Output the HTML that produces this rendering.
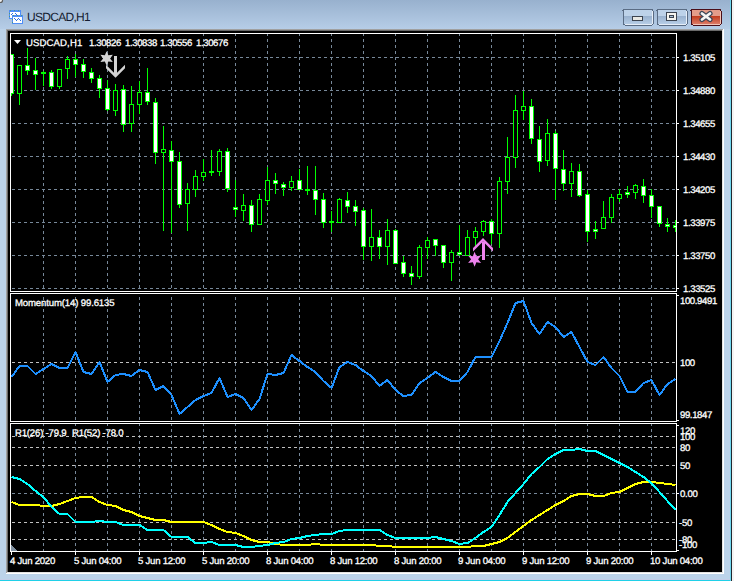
<!DOCTYPE html>
<html><head><meta charset="utf-8"><style>
html,body{margin:0;padding:0;width:734px;height:581px;overflow:hidden;}
body{position:relative;background:#bcd3ea;font-family:"Liberation Sans",sans-serif;}
.t{position:absolute;white-space:pre;line-height:1;text-rendering:geometricPrecision;-webkit-text-stroke:0.3px currentColor;}
#lbl .t{transform-origin:0 0;}
svg{position:absolute;left:0;top:0;}
</style></head><body>
<svg width="734" height="581" viewBox="0 0 734 581" shape-rendering="crispEdges">
<defs>
<linearGradient id="tg" x1="0" y1="0" x2="0" y2="1">
<stop offset="0" stop-color="#98b1ce"/><stop offset="1" stop-color="#b6cde7"/>
</linearGradient>
<linearGradient id="bg1" x1="0" y1="0" x2="0" y2="1"><stop offset="0" stop-color="#98b1ce"/><stop offset="1" stop-color="#b6cde6"/></linearGradient>
<linearGradient id="bg2" x1="0" y1="0" x2="0" y2="1"><stop offset="0" stop-color="#c03a1c"/><stop offset="1" stop-color="#dc7a66"/></linearGradient>
<clipPath id="cm"><rect x="11" y="34" width="665" height="257"/></clipPath>
<clipPath id="cp2"><rect x="11" y="294" width="665" height="127"/></clipPath>
<clipPath id="cp3"><rect x="11" y="424" width="665" height="127"/></clipPath>
</defs>
<rect x="0" y="0" width="734" height="581" fill="#bcd3ea"/>
<rect x="0" y="0" width="734" height="29" fill="url(#tg)"/>
<circle cx="0.5" cy="0.5" r="2.6" fill="#606060" shape-rendering="geometricPrecision"/><circle cx="0" cy="0" r="2" fill="#f0f0f0" shape-rendering="geometricPrecision"/>
<rect x="0" y="579" width="730" height="1" fill="#c4cde8"/>
<rect x="0" y="580" width="731" height="1" fill="#20d0e8"/>
<rect x="730" y="0" width="1" height="581" fill="#70d8f0"/>
<rect x="731" y="0" width="1" height="581" fill="#202830"/>
<rect x="732" y="0" width="2" height="581" fill="#f4f4f4"/>

<g shape-rendering="crispEdges">
<rect x="9" y="10" width="12" height="9" fill="#4f8ef8"/>
<rect x="10" y="12" width="10" height="6" fill="#ffffff"/>
<path d="M11 14h1v1h-1zM12 13h1v1h-1zM15 13h1v1h-1zM16 14h1v1h-1zM17 15h1v1h-1z" fill="#3070e0"/>
<rect x="12" y="15" width="11" height="9" fill="#4f8ef8"/>
<rect x="13" y="17" width="9" height="6" fill="#ffffff"/>
<path d="M14 18h1v1h-1zM15 19h1v1h-1zM16 20h1v1h-1zM17 19h1v1h-1zM18 18h1v1h-1zM19 19h1v1h-1zM20 20h1v1h-1z" fill="#3070e0"/>
<path d="M10 10h1v1h-1zM14 10h1v1h-1zM18 10h1v1h-1zM13 15h1v1h-1zM17 15h1v1h-1zM21 15h1v1h-1zM9 13h1v1h-1zM9 16h1v1h-1zM12 19h1v1h-1zM12 22h1v1h-1z" fill="#4a9a80"/>
</g>
<g>
<rect x="622.5" y="8.5" width="31" height="17" rx="2" fill="#5a6c84"/>
<rect x="623.5" y="9.5" width="29" height="15" rx="1" fill="#e6eef8"/>
<rect x="624" y="10" width="28" height="6" fill="#bdd2e9"/>
<rect x="624" y="16" width="28" height="8" fill="url(#bg1)"/>
<rect x="656.5" y="8.5" width="31" height="17" rx="2" fill="#5a6c84"/>
<rect x="657.5" y="9.5" width="29" height="15" rx="1" fill="#e6eef8"/>
<rect x="658" y="10" width="28" height="6" fill="#bdd2e9"/>
<rect x="658" y="16" width="28" height="8" fill="url(#bg1)"/>
<rect x="690.5" y="8.5" width="31" height="17" rx="2" fill="#4a0e18"/>
<rect x="691.5" y="9.5" width="29" height="15" rx="1" fill="#f2c4b8"/>
<rect x="692" y="10" width="28" height="6" fill="#e49c8a"/>
<rect x="692" y="16" width="28" height="8" fill="url(#bg2)"/>
</g>
<g shape-rendering="crispEdges">
<rect x="632" y="16" width="11" height="5" fill="#3c4450"/>
<rect x="633" y="17" width="9" height="3" fill="#e8e8e4"/>
<rect x="666" y="12" width="11" height="9" fill="#3c4450"/>
<rect x="667" y="13" width="9" height="7" fill="#f4f4f0"/>
<rect x="669" y="15" width="5" height="3" fill="#3c4450"/>
<rect x="670" y="16" width="3" height="1" fill="#a8c0d8"/>
</g>
<g shape-rendering="geometricPrecision">
<path d="M702 13.5 L710 19.5 M710 13.5 L702 19.5" stroke="#3c4658" stroke-width="5.2" stroke-linecap="round"/>
<path d="M702 13.5 L710 19.5 M710 13.5 L702 19.5" stroke="#f4f4f4" stroke-width="2.8" stroke-linecap="round"/>
</g>

<rect x="6" y="29" width="717" height="1" fill="#a0a0a0"/>
<rect x="6" y="29" width="1" height="544" fill="#a0a0a0"/>
<rect x="7" y="30" width="715" height="1" fill="#696969"/>
<rect x="7" y="30" width="1" height="542" fill="#696969"/>
<rect x="6" y="573" width="718" height="1" fill="#ffffff"/>
<rect x="723" y="29" width="1" height="545" fill="#ffffff"/>
<rect x="7" y="572" width="716" height="1" fill="#e3e3e3"/>
<rect x="722" y="30" width="1" height="543" fill="#e3e3e3"/>
<rect x="8" y="31" width="714" height="541" fill="#000"/>
<path d="M43 34v2h1v-2zM43 39v3h1v-3zM43 45v3h1v-3zM43 51v3h1v-3zM43 57v3h1v-3zM43 63v3h1v-3zM43 69v3h1v-3zM43 75v3h1v-3zM43 81v3h1v-3zM43 87v3h1v-3zM43 93v3h1v-3zM43 99v3h1v-3zM43 105v3h1v-3zM43 111v3h1v-3zM43 117v3h1v-3zM43 123v3h1v-3zM43 129v3h1v-3zM43 135v3h1v-3zM43 141v3h1v-3zM43 147v3h1v-3zM43 153v3h1v-3zM43 159v3h1v-3zM43 165v3h1v-3zM43 171v3h1v-3zM43 177v3h1v-3zM43 183v3h1v-3zM43 189v3h1v-3zM43 195v3h1v-3zM43 201v3h1v-3zM43 207v3h1v-3zM43 213v3h1v-3zM43 219v3h1v-3zM43 225v3h1v-3zM43 231v3h1v-3zM43 237v3h1v-3zM43 243v3h1v-3zM43 249v3h1v-3zM43 255v3h1v-3zM43 261v3h1v-3zM43 267v3h1v-3zM43 273v3h1v-3zM43 279v3h1v-3zM43 285v3h1v-3z" fill="#778899"/><path d="M75 34v2h1v-2zM75 39v3h1v-3zM75 45v3h1v-3zM75 51v3h1v-3zM75 57v3h1v-3zM75 63v3h1v-3zM75 69v3h1v-3zM75 75v3h1v-3zM75 81v3h1v-3zM75 87v3h1v-3zM75 93v3h1v-3zM75 99v3h1v-3zM75 105v3h1v-3zM75 111v3h1v-3zM75 117v3h1v-3zM75 123v3h1v-3zM75 129v3h1v-3zM75 135v3h1v-3zM75 141v3h1v-3zM75 147v3h1v-3zM75 153v3h1v-3zM75 159v3h1v-3zM75 165v3h1v-3zM75 171v3h1v-3zM75 177v3h1v-3zM75 183v3h1v-3zM75 189v3h1v-3zM75 195v3h1v-3zM75 201v3h1v-3zM75 207v3h1v-3zM75 213v3h1v-3zM75 219v3h1v-3zM75 225v3h1v-3zM75 231v3h1v-3zM75 237v3h1v-3zM75 243v3h1v-3zM75 249v3h1v-3zM75 255v3h1v-3zM75 261v3h1v-3zM75 267v3h1v-3zM75 273v3h1v-3zM75 279v3h1v-3zM75 285v3h1v-3z" fill="#778899"/><path d="M107 34v2h1v-2zM107 39v3h1v-3zM107 45v3h1v-3zM107 51v3h1v-3zM107 57v3h1v-3zM107 63v3h1v-3zM107 69v3h1v-3zM107 75v3h1v-3zM107 81v3h1v-3zM107 87v3h1v-3zM107 93v3h1v-3zM107 99v3h1v-3zM107 105v3h1v-3zM107 111v3h1v-3zM107 117v3h1v-3zM107 123v3h1v-3zM107 129v3h1v-3zM107 135v3h1v-3zM107 141v3h1v-3zM107 147v3h1v-3zM107 153v3h1v-3zM107 159v3h1v-3zM107 165v3h1v-3zM107 171v3h1v-3zM107 177v3h1v-3zM107 183v3h1v-3zM107 189v3h1v-3zM107 195v3h1v-3zM107 201v3h1v-3zM107 207v3h1v-3zM107 213v3h1v-3zM107 219v3h1v-3zM107 225v3h1v-3zM107 231v3h1v-3zM107 237v3h1v-3zM107 243v3h1v-3zM107 249v3h1v-3zM107 255v3h1v-3zM107 261v3h1v-3zM107 267v3h1v-3zM107 273v3h1v-3zM107 279v3h1v-3zM107 285v3h1v-3z" fill="#778899"/><path d="M139 34v2h1v-2zM139 39v3h1v-3zM139 45v3h1v-3zM139 51v3h1v-3zM139 57v3h1v-3zM139 63v3h1v-3zM139 69v3h1v-3zM139 75v3h1v-3zM139 81v3h1v-3zM139 87v3h1v-3zM139 93v3h1v-3zM139 99v3h1v-3zM139 105v3h1v-3zM139 111v3h1v-3zM139 117v3h1v-3zM139 123v3h1v-3zM139 129v3h1v-3zM139 135v3h1v-3zM139 141v3h1v-3zM139 147v3h1v-3zM139 153v3h1v-3zM139 159v3h1v-3zM139 165v3h1v-3zM139 171v3h1v-3zM139 177v3h1v-3zM139 183v3h1v-3zM139 189v3h1v-3zM139 195v3h1v-3zM139 201v3h1v-3zM139 207v3h1v-3zM139 213v3h1v-3zM139 219v3h1v-3zM139 225v3h1v-3zM139 231v3h1v-3zM139 237v3h1v-3zM139 243v3h1v-3zM139 249v3h1v-3zM139 255v3h1v-3zM139 261v3h1v-3zM139 267v3h1v-3zM139 273v3h1v-3zM139 279v3h1v-3zM139 285v3h1v-3z" fill="#778899"/><path d="M171 34v2h1v-2zM171 39v3h1v-3zM171 45v3h1v-3zM171 51v3h1v-3zM171 57v3h1v-3zM171 63v3h1v-3zM171 69v3h1v-3zM171 75v3h1v-3zM171 81v3h1v-3zM171 87v3h1v-3zM171 93v3h1v-3zM171 99v3h1v-3zM171 105v3h1v-3zM171 111v3h1v-3zM171 117v3h1v-3zM171 123v3h1v-3zM171 129v3h1v-3zM171 135v3h1v-3zM171 141v3h1v-3zM171 147v3h1v-3zM171 153v3h1v-3zM171 159v3h1v-3zM171 165v3h1v-3zM171 171v3h1v-3zM171 177v3h1v-3zM171 183v3h1v-3zM171 189v3h1v-3zM171 195v3h1v-3zM171 201v3h1v-3zM171 207v3h1v-3zM171 213v3h1v-3zM171 219v3h1v-3zM171 225v3h1v-3zM171 231v3h1v-3zM171 237v3h1v-3zM171 243v3h1v-3zM171 249v3h1v-3zM171 255v3h1v-3zM171 261v3h1v-3zM171 267v3h1v-3zM171 273v3h1v-3zM171 279v3h1v-3zM171 285v3h1v-3z" fill="#778899"/><path d="M203 34v2h1v-2zM203 39v3h1v-3zM203 45v3h1v-3zM203 51v3h1v-3zM203 57v3h1v-3zM203 63v3h1v-3zM203 69v3h1v-3zM203 75v3h1v-3zM203 81v3h1v-3zM203 87v3h1v-3zM203 93v3h1v-3zM203 99v3h1v-3zM203 105v3h1v-3zM203 111v3h1v-3zM203 117v3h1v-3zM203 123v3h1v-3zM203 129v3h1v-3zM203 135v3h1v-3zM203 141v3h1v-3zM203 147v3h1v-3zM203 153v3h1v-3zM203 159v3h1v-3zM203 165v3h1v-3zM203 171v3h1v-3zM203 177v3h1v-3zM203 183v3h1v-3zM203 189v3h1v-3zM203 195v3h1v-3zM203 201v3h1v-3zM203 207v3h1v-3zM203 213v3h1v-3zM203 219v3h1v-3zM203 225v3h1v-3zM203 231v3h1v-3zM203 237v3h1v-3zM203 243v3h1v-3zM203 249v3h1v-3zM203 255v3h1v-3zM203 261v3h1v-3zM203 267v3h1v-3zM203 273v3h1v-3zM203 279v3h1v-3zM203 285v3h1v-3z" fill="#778899"/><path d="M235 34v2h1v-2zM235 39v3h1v-3zM235 45v3h1v-3zM235 51v3h1v-3zM235 57v3h1v-3zM235 63v3h1v-3zM235 69v3h1v-3zM235 75v3h1v-3zM235 81v3h1v-3zM235 87v3h1v-3zM235 93v3h1v-3zM235 99v3h1v-3zM235 105v3h1v-3zM235 111v3h1v-3zM235 117v3h1v-3zM235 123v3h1v-3zM235 129v3h1v-3zM235 135v3h1v-3zM235 141v3h1v-3zM235 147v3h1v-3zM235 153v3h1v-3zM235 159v3h1v-3zM235 165v3h1v-3zM235 171v3h1v-3zM235 177v3h1v-3zM235 183v3h1v-3zM235 189v3h1v-3zM235 195v3h1v-3zM235 201v3h1v-3zM235 207v3h1v-3zM235 213v3h1v-3zM235 219v3h1v-3zM235 225v3h1v-3zM235 231v3h1v-3zM235 237v3h1v-3zM235 243v3h1v-3zM235 249v3h1v-3zM235 255v3h1v-3zM235 261v3h1v-3zM235 267v3h1v-3zM235 273v3h1v-3zM235 279v3h1v-3zM235 285v3h1v-3z" fill="#778899"/><path d="M267 34v2h1v-2zM267 39v3h1v-3zM267 45v3h1v-3zM267 51v3h1v-3zM267 57v3h1v-3zM267 63v3h1v-3zM267 69v3h1v-3zM267 75v3h1v-3zM267 81v3h1v-3zM267 87v3h1v-3zM267 93v3h1v-3zM267 99v3h1v-3zM267 105v3h1v-3zM267 111v3h1v-3zM267 117v3h1v-3zM267 123v3h1v-3zM267 129v3h1v-3zM267 135v3h1v-3zM267 141v3h1v-3zM267 147v3h1v-3zM267 153v3h1v-3zM267 159v3h1v-3zM267 165v3h1v-3zM267 171v3h1v-3zM267 177v3h1v-3zM267 183v3h1v-3zM267 189v3h1v-3zM267 195v3h1v-3zM267 201v3h1v-3zM267 207v3h1v-3zM267 213v3h1v-3zM267 219v3h1v-3zM267 225v3h1v-3zM267 231v3h1v-3zM267 237v3h1v-3zM267 243v3h1v-3zM267 249v3h1v-3zM267 255v3h1v-3zM267 261v3h1v-3zM267 267v3h1v-3zM267 273v3h1v-3zM267 279v3h1v-3zM267 285v3h1v-3z" fill="#778899"/><path d="M299 34v2h1v-2zM299 39v3h1v-3zM299 45v3h1v-3zM299 51v3h1v-3zM299 57v3h1v-3zM299 63v3h1v-3zM299 69v3h1v-3zM299 75v3h1v-3zM299 81v3h1v-3zM299 87v3h1v-3zM299 93v3h1v-3zM299 99v3h1v-3zM299 105v3h1v-3zM299 111v3h1v-3zM299 117v3h1v-3zM299 123v3h1v-3zM299 129v3h1v-3zM299 135v3h1v-3zM299 141v3h1v-3zM299 147v3h1v-3zM299 153v3h1v-3zM299 159v3h1v-3zM299 165v3h1v-3zM299 171v3h1v-3zM299 177v3h1v-3zM299 183v3h1v-3zM299 189v3h1v-3zM299 195v3h1v-3zM299 201v3h1v-3zM299 207v3h1v-3zM299 213v3h1v-3zM299 219v3h1v-3zM299 225v3h1v-3zM299 231v3h1v-3zM299 237v3h1v-3zM299 243v3h1v-3zM299 249v3h1v-3zM299 255v3h1v-3zM299 261v3h1v-3zM299 267v3h1v-3zM299 273v3h1v-3zM299 279v3h1v-3zM299 285v3h1v-3z" fill="#778899"/><path d="M331 34v2h1v-2zM331 39v3h1v-3zM331 45v3h1v-3zM331 51v3h1v-3zM331 57v3h1v-3zM331 63v3h1v-3zM331 69v3h1v-3zM331 75v3h1v-3zM331 81v3h1v-3zM331 87v3h1v-3zM331 93v3h1v-3zM331 99v3h1v-3zM331 105v3h1v-3zM331 111v3h1v-3zM331 117v3h1v-3zM331 123v3h1v-3zM331 129v3h1v-3zM331 135v3h1v-3zM331 141v3h1v-3zM331 147v3h1v-3zM331 153v3h1v-3zM331 159v3h1v-3zM331 165v3h1v-3zM331 171v3h1v-3zM331 177v3h1v-3zM331 183v3h1v-3zM331 189v3h1v-3zM331 195v3h1v-3zM331 201v3h1v-3zM331 207v3h1v-3zM331 213v3h1v-3zM331 219v3h1v-3zM331 225v3h1v-3zM331 231v3h1v-3zM331 237v3h1v-3zM331 243v3h1v-3zM331 249v3h1v-3zM331 255v3h1v-3zM331 261v3h1v-3zM331 267v3h1v-3zM331 273v3h1v-3zM331 279v3h1v-3zM331 285v3h1v-3z" fill="#778899"/><path d="M363 34v2h1v-2zM363 39v3h1v-3zM363 45v3h1v-3zM363 51v3h1v-3zM363 57v3h1v-3zM363 63v3h1v-3zM363 69v3h1v-3zM363 75v3h1v-3zM363 81v3h1v-3zM363 87v3h1v-3zM363 93v3h1v-3zM363 99v3h1v-3zM363 105v3h1v-3zM363 111v3h1v-3zM363 117v3h1v-3zM363 123v3h1v-3zM363 129v3h1v-3zM363 135v3h1v-3zM363 141v3h1v-3zM363 147v3h1v-3zM363 153v3h1v-3zM363 159v3h1v-3zM363 165v3h1v-3zM363 171v3h1v-3zM363 177v3h1v-3zM363 183v3h1v-3zM363 189v3h1v-3zM363 195v3h1v-3zM363 201v3h1v-3zM363 207v3h1v-3zM363 213v3h1v-3zM363 219v3h1v-3zM363 225v3h1v-3zM363 231v3h1v-3zM363 237v3h1v-3zM363 243v3h1v-3zM363 249v3h1v-3zM363 255v3h1v-3zM363 261v3h1v-3zM363 267v3h1v-3zM363 273v3h1v-3zM363 279v3h1v-3zM363 285v3h1v-3z" fill="#778899"/><path d="M395 34v2h1v-2zM395 39v3h1v-3zM395 45v3h1v-3zM395 51v3h1v-3zM395 57v3h1v-3zM395 63v3h1v-3zM395 69v3h1v-3zM395 75v3h1v-3zM395 81v3h1v-3zM395 87v3h1v-3zM395 93v3h1v-3zM395 99v3h1v-3zM395 105v3h1v-3zM395 111v3h1v-3zM395 117v3h1v-3zM395 123v3h1v-3zM395 129v3h1v-3zM395 135v3h1v-3zM395 141v3h1v-3zM395 147v3h1v-3zM395 153v3h1v-3zM395 159v3h1v-3zM395 165v3h1v-3zM395 171v3h1v-3zM395 177v3h1v-3zM395 183v3h1v-3zM395 189v3h1v-3zM395 195v3h1v-3zM395 201v3h1v-3zM395 207v3h1v-3zM395 213v3h1v-3zM395 219v3h1v-3zM395 225v3h1v-3zM395 231v3h1v-3zM395 237v3h1v-3zM395 243v3h1v-3zM395 249v3h1v-3zM395 255v3h1v-3zM395 261v3h1v-3zM395 267v3h1v-3zM395 273v3h1v-3zM395 279v3h1v-3zM395 285v3h1v-3z" fill="#778899"/><path d="M427 34v2h1v-2zM427 39v3h1v-3zM427 45v3h1v-3zM427 51v3h1v-3zM427 57v3h1v-3zM427 63v3h1v-3zM427 69v3h1v-3zM427 75v3h1v-3zM427 81v3h1v-3zM427 87v3h1v-3zM427 93v3h1v-3zM427 99v3h1v-3zM427 105v3h1v-3zM427 111v3h1v-3zM427 117v3h1v-3zM427 123v3h1v-3zM427 129v3h1v-3zM427 135v3h1v-3zM427 141v3h1v-3zM427 147v3h1v-3zM427 153v3h1v-3zM427 159v3h1v-3zM427 165v3h1v-3zM427 171v3h1v-3zM427 177v3h1v-3zM427 183v3h1v-3zM427 189v3h1v-3zM427 195v3h1v-3zM427 201v3h1v-3zM427 207v3h1v-3zM427 213v3h1v-3zM427 219v3h1v-3zM427 225v3h1v-3zM427 231v3h1v-3zM427 237v3h1v-3zM427 243v3h1v-3zM427 249v3h1v-3zM427 255v3h1v-3zM427 261v3h1v-3zM427 267v3h1v-3zM427 273v3h1v-3zM427 279v3h1v-3zM427 285v3h1v-3z" fill="#778899"/><path d="M459 34v2h1v-2zM459 39v3h1v-3zM459 45v3h1v-3zM459 51v3h1v-3zM459 57v3h1v-3zM459 63v3h1v-3zM459 69v3h1v-3zM459 75v3h1v-3zM459 81v3h1v-3zM459 87v3h1v-3zM459 93v3h1v-3zM459 99v3h1v-3zM459 105v3h1v-3zM459 111v3h1v-3zM459 117v3h1v-3zM459 123v3h1v-3zM459 129v3h1v-3zM459 135v3h1v-3zM459 141v3h1v-3zM459 147v3h1v-3zM459 153v3h1v-3zM459 159v3h1v-3zM459 165v3h1v-3zM459 171v3h1v-3zM459 177v3h1v-3zM459 183v3h1v-3zM459 189v3h1v-3zM459 195v3h1v-3zM459 201v3h1v-3zM459 207v3h1v-3zM459 213v3h1v-3zM459 219v3h1v-3zM459 225v3h1v-3zM459 231v3h1v-3zM459 237v3h1v-3zM459 243v3h1v-3zM459 249v3h1v-3zM459 255v3h1v-3zM459 261v3h1v-3zM459 267v3h1v-3zM459 273v3h1v-3zM459 279v3h1v-3zM459 285v3h1v-3z" fill="#778899"/><path d="M491 34v2h1v-2zM491 39v3h1v-3zM491 45v3h1v-3zM491 51v3h1v-3zM491 57v3h1v-3zM491 63v3h1v-3zM491 69v3h1v-3zM491 75v3h1v-3zM491 81v3h1v-3zM491 87v3h1v-3zM491 93v3h1v-3zM491 99v3h1v-3zM491 105v3h1v-3zM491 111v3h1v-3zM491 117v3h1v-3zM491 123v3h1v-3zM491 129v3h1v-3zM491 135v3h1v-3zM491 141v3h1v-3zM491 147v3h1v-3zM491 153v3h1v-3zM491 159v3h1v-3zM491 165v3h1v-3zM491 171v3h1v-3zM491 177v3h1v-3zM491 183v3h1v-3zM491 189v3h1v-3zM491 195v3h1v-3zM491 201v3h1v-3zM491 207v3h1v-3zM491 213v3h1v-3zM491 219v3h1v-3zM491 225v3h1v-3zM491 231v3h1v-3zM491 237v3h1v-3zM491 243v3h1v-3zM491 249v3h1v-3zM491 255v3h1v-3zM491 261v3h1v-3zM491 267v3h1v-3zM491 273v3h1v-3zM491 279v3h1v-3zM491 285v3h1v-3z" fill="#778899"/><path d="M523 34v2h1v-2zM523 39v3h1v-3zM523 45v3h1v-3zM523 51v3h1v-3zM523 57v3h1v-3zM523 63v3h1v-3zM523 69v3h1v-3zM523 75v3h1v-3zM523 81v3h1v-3zM523 87v3h1v-3zM523 93v3h1v-3zM523 99v3h1v-3zM523 105v3h1v-3zM523 111v3h1v-3zM523 117v3h1v-3zM523 123v3h1v-3zM523 129v3h1v-3zM523 135v3h1v-3zM523 141v3h1v-3zM523 147v3h1v-3zM523 153v3h1v-3zM523 159v3h1v-3zM523 165v3h1v-3zM523 171v3h1v-3zM523 177v3h1v-3zM523 183v3h1v-3zM523 189v3h1v-3zM523 195v3h1v-3zM523 201v3h1v-3zM523 207v3h1v-3zM523 213v3h1v-3zM523 219v3h1v-3zM523 225v3h1v-3zM523 231v3h1v-3zM523 237v3h1v-3zM523 243v3h1v-3zM523 249v3h1v-3zM523 255v3h1v-3zM523 261v3h1v-3zM523 267v3h1v-3zM523 273v3h1v-3zM523 279v3h1v-3zM523 285v3h1v-3z" fill="#778899"/><path d="M555 34v2h1v-2zM555 39v3h1v-3zM555 45v3h1v-3zM555 51v3h1v-3zM555 57v3h1v-3zM555 63v3h1v-3zM555 69v3h1v-3zM555 75v3h1v-3zM555 81v3h1v-3zM555 87v3h1v-3zM555 93v3h1v-3zM555 99v3h1v-3zM555 105v3h1v-3zM555 111v3h1v-3zM555 117v3h1v-3zM555 123v3h1v-3zM555 129v3h1v-3zM555 135v3h1v-3zM555 141v3h1v-3zM555 147v3h1v-3zM555 153v3h1v-3zM555 159v3h1v-3zM555 165v3h1v-3zM555 171v3h1v-3zM555 177v3h1v-3zM555 183v3h1v-3zM555 189v3h1v-3zM555 195v3h1v-3zM555 201v3h1v-3zM555 207v3h1v-3zM555 213v3h1v-3zM555 219v3h1v-3zM555 225v3h1v-3zM555 231v3h1v-3zM555 237v3h1v-3zM555 243v3h1v-3zM555 249v3h1v-3zM555 255v3h1v-3zM555 261v3h1v-3zM555 267v3h1v-3zM555 273v3h1v-3zM555 279v3h1v-3zM555 285v3h1v-3z" fill="#778899"/><path d="M587 34v2h1v-2zM587 39v3h1v-3zM587 45v3h1v-3zM587 51v3h1v-3zM587 57v3h1v-3zM587 63v3h1v-3zM587 69v3h1v-3zM587 75v3h1v-3zM587 81v3h1v-3zM587 87v3h1v-3zM587 93v3h1v-3zM587 99v3h1v-3zM587 105v3h1v-3zM587 111v3h1v-3zM587 117v3h1v-3zM587 123v3h1v-3zM587 129v3h1v-3zM587 135v3h1v-3zM587 141v3h1v-3zM587 147v3h1v-3zM587 153v3h1v-3zM587 159v3h1v-3zM587 165v3h1v-3zM587 171v3h1v-3zM587 177v3h1v-3zM587 183v3h1v-3zM587 189v3h1v-3zM587 195v3h1v-3zM587 201v3h1v-3zM587 207v3h1v-3zM587 213v3h1v-3zM587 219v3h1v-3zM587 225v3h1v-3zM587 231v3h1v-3zM587 237v3h1v-3zM587 243v3h1v-3zM587 249v3h1v-3zM587 255v3h1v-3zM587 261v3h1v-3zM587 267v3h1v-3zM587 273v3h1v-3zM587 279v3h1v-3zM587 285v3h1v-3z" fill="#778899"/><path d="M619 34v2h1v-2zM619 39v3h1v-3zM619 45v3h1v-3zM619 51v3h1v-3zM619 57v3h1v-3zM619 63v3h1v-3zM619 69v3h1v-3zM619 75v3h1v-3zM619 81v3h1v-3zM619 87v3h1v-3zM619 93v3h1v-3zM619 99v3h1v-3zM619 105v3h1v-3zM619 111v3h1v-3zM619 117v3h1v-3zM619 123v3h1v-3zM619 129v3h1v-3zM619 135v3h1v-3zM619 141v3h1v-3zM619 147v3h1v-3zM619 153v3h1v-3zM619 159v3h1v-3zM619 165v3h1v-3zM619 171v3h1v-3zM619 177v3h1v-3zM619 183v3h1v-3zM619 189v3h1v-3zM619 195v3h1v-3zM619 201v3h1v-3zM619 207v3h1v-3zM619 213v3h1v-3zM619 219v3h1v-3zM619 225v3h1v-3zM619 231v3h1v-3zM619 237v3h1v-3zM619 243v3h1v-3zM619 249v3h1v-3zM619 255v3h1v-3zM619 261v3h1v-3zM619 267v3h1v-3zM619 273v3h1v-3zM619 279v3h1v-3zM619 285v3h1v-3z" fill="#778899"/><path d="M651 34v2h1v-2zM651 39v3h1v-3zM651 45v3h1v-3zM651 51v3h1v-3zM651 57v3h1v-3zM651 63v3h1v-3zM651 69v3h1v-3zM651 75v3h1v-3zM651 81v3h1v-3zM651 87v3h1v-3zM651 93v3h1v-3zM651 99v3h1v-3zM651 105v3h1v-3zM651 111v3h1v-3zM651 117v3h1v-3zM651 123v3h1v-3zM651 129v3h1v-3zM651 135v3h1v-3zM651 141v3h1v-3zM651 147v3h1v-3zM651 153v3h1v-3zM651 159v3h1v-3zM651 165v3h1v-3zM651 171v3h1v-3zM651 177v3h1v-3zM651 183v3h1v-3zM651 189v3h1v-3zM651 195v3h1v-3zM651 201v3h1v-3zM651 207v3h1v-3zM651 213v3h1v-3zM651 219v3h1v-3zM651 225v3h1v-3zM651 231v3h1v-3zM651 237v3h1v-3zM651 243v3h1v-3zM651 249v3h1v-3zM651 255v3h1v-3zM651 261v3h1v-3zM651 267v3h1v-3zM651 273v3h1v-3zM651 279v3h1v-3zM651 285v3h1v-3z" fill="#778899"/><path d="M43 297v3h1v-3zM43 303v3h1v-3zM43 309v3h1v-3zM43 315v3h1v-3zM43 321v3h1v-3zM43 327v3h1v-3zM43 333v3h1v-3zM43 339v3h1v-3zM43 345v3h1v-3zM43 351v3h1v-3zM43 357v3h1v-3zM43 363v3h1v-3zM43 369v3h1v-3zM43 375v3h1v-3zM43 381v3h1v-3zM43 387v3h1v-3zM43 393v3h1v-3zM43 399v3h1v-3zM43 405v3h1v-3zM43 411v3h1v-3zM43 417v3h1v-3z" fill="#778899"/><path d="M75 297v3h1v-3zM75 303v3h1v-3zM75 309v3h1v-3zM75 315v3h1v-3zM75 321v3h1v-3zM75 327v3h1v-3zM75 333v3h1v-3zM75 339v3h1v-3zM75 345v3h1v-3zM75 351v3h1v-3zM75 357v3h1v-3zM75 363v3h1v-3zM75 369v3h1v-3zM75 375v3h1v-3zM75 381v3h1v-3zM75 387v3h1v-3zM75 393v3h1v-3zM75 399v3h1v-3zM75 405v3h1v-3zM75 411v3h1v-3zM75 417v3h1v-3z" fill="#778899"/><path d="M107 297v3h1v-3zM107 303v3h1v-3zM107 309v3h1v-3zM107 315v3h1v-3zM107 321v3h1v-3zM107 327v3h1v-3zM107 333v3h1v-3zM107 339v3h1v-3zM107 345v3h1v-3zM107 351v3h1v-3zM107 357v3h1v-3zM107 363v3h1v-3zM107 369v3h1v-3zM107 375v3h1v-3zM107 381v3h1v-3zM107 387v3h1v-3zM107 393v3h1v-3zM107 399v3h1v-3zM107 405v3h1v-3zM107 411v3h1v-3zM107 417v3h1v-3z" fill="#778899"/><path d="M139 297v3h1v-3zM139 303v3h1v-3zM139 309v3h1v-3zM139 315v3h1v-3zM139 321v3h1v-3zM139 327v3h1v-3zM139 333v3h1v-3zM139 339v3h1v-3zM139 345v3h1v-3zM139 351v3h1v-3zM139 357v3h1v-3zM139 363v3h1v-3zM139 369v3h1v-3zM139 375v3h1v-3zM139 381v3h1v-3zM139 387v3h1v-3zM139 393v3h1v-3zM139 399v3h1v-3zM139 405v3h1v-3zM139 411v3h1v-3zM139 417v3h1v-3z" fill="#778899"/><path d="M171 297v3h1v-3zM171 303v3h1v-3zM171 309v3h1v-3zM171 315v3h1v-3zM171 321v3h1v-3zM171 327v3h1v-3zM171 333v3h1v-3zM171 339v3h1v-3zM171 345v3h1v-3zM171 351v3h1v-3zM171 357v3h1v-3zM171 363v3h1v-3zM171 369v3h1v-3zM171 375v3h1v-3zM171 381v3h1v-3zM171 387v3h1v-3zM171 393v3h1v-3zM171 399v3h1v-3zM171 405v3h1v-3zM171 411v3h1v-3zM171 417v3h1v-3z" fill="#778899"/><path d="M203 297v3h1v-3zM203 303v3h1v-3zM203 309v3h1v-3zM203 315v3h1v-3zM203 321v3h1v-3zM203 327v3h1v-3zM203 333v3h1v-3zM203 339v3h1v-3zM203 345v3h1v-3zM203 351v3h1v-3zM203 357v3h1v-3zM203 363v3h1v-3zM203 369v3h1v-3zM203 375v3h1v-3zM203 381v3h1v-3zM203 387v3h1v-3zM203 393v3h1v-3zM203 399v3h1v-3zM203 405v3h1v-3zM203 411v3h1v-3zM203 417v3h1v-3z" fill="#778899"/><path d="M235 297v3h1v-3zM235 303v3h1v-3zM235 309v3h1v-3zM235 315v3h1v-3zM235 321v3h1v-3zM235 327v3h1v-3zM235 333v3h1v-3zM235 339v3h1v-3zM235 345v3h1v-3zM235 351v3h1v-3zM235 357v3h1v-3zM235 363v3h1v-3zM235 369v3h1v-3zM235 375v3h1v-3zM235 381v3h1v-3zM235 387v3h1v-3zM235 393v3h1v-3zM235 399v3h1v-3zM235 405v3h1v-3zM235 411v3h1v-3zM235 417v3h1v-3z" fill="#778899"/><path d="M267 297v3h1v-3zM267 303v3h1v-3zM267 309v3h1v-3zM267 315v3h1v-3zM267 321v3h1v-3zM267 327v3h1v-3zM267 333v3h1v-3zM267 339v3h1v-3zM267 345v3h1v-3zM267 351v3h1v-3zM267 357v3h1v-3zM267 363v3h1v-3zM267 369v3h1v-3zM267 375v3h1v-3zM267 381v3h1v-3zM267 387v3h1v-3zM267 393v3h1v-3zM267 399v3h1v-3zM267 405v3h1v-3zM267 411v3h1v-3zM267 417v3h1v-3z" fill="#778899"/><path d="M299 297v3h1v-3zM299 303v3h1v-3zM299 309v3h1v-3zM299 315v3h1v-3zM299 321v3h1v-3zM299 327v3h1v-3zM299 333v3h1v-3zM299 339v3h1v-3zM299 345v3h1v-3zM299 351v3h1v-3zM299 357v3h1v-3zM299 363v3h1v-3zM299 369v3h1v-3zM299 375v3h1v-3zM299 381v3h1v-3zM299 387v3h1v-3zM299 393v3h1v-3zM299 399v3h1v-3zM299 405v3h1v-3zM299 411v3h1v-3zM299 417v3h1v-3z" fill="#778899"/><path d="M331 297v3h1v-3zM331 303v3h1v-3zM331 309v3h1v-3zM331 315v3h1v-3zM331 321v3h1v-3zM331 327v3h1v-3zM331 333v3h1v-3zM331 339v3h1v-3zM331 345v3h1v-3zM331 351v3h1v-3zM331 357v3h1v-3zM331 363v3h1v-3zM331 369v3h1v-3zM331 375v3h1v-3zM331 381v3h1v-3zM331 387v3h1v-3zM331 393v3h1v-3zM331 399v3h1v-3zM331 405v3h1v-3zM331 411v3h1v-3zM331 417v3h1v-3z" fill="#778899"/><path d="M363 297v3h1v-3zM363 303v3h1v-3zM363 309v3h1v-3zM363 315v3h1v-3zM363 321v3h1v-3zM363 327v3h1v-3zM363 333v3h1v-3zM363 339v3h1v-3zM363 345v3h1v-3zM363 351v3h1v-3zM363 357v3h1v-3zM363 363v3h1v-3zM363 369v3h1v-3zM363 375v3h1v-3zM363 381v3h1v-3zM363 387v3h1v-3zM363 393v3h1v-3zM363 399v3h1v-3zM363 405v3h1v-3zM363 411v3h1v-3zM363 417v3h1v-3z" fill="#778899"/><path d="M395 297v3h1v-3zM395 303v3h1v-3zM395 309v3h1v-3zM395 315v3h1v-3zM395 321v3h1v-3zM395 327v3h1v-3zM395 333v3h1v-3zM395 339v3h1v-3zM395 345v3h1v-3zM395 351v3h1v-3zM395 357v3h1v-3zM395 363v3h1v-3zM395 369v3h1v-3zM395 375v3h1v-3zM395 381v3h1v-3zM395 387v3h1v-3zM395 393v3h1v-3zM395 399v3h1v-3zM395 405v3h1v-3zM395 411v3h1v-3zM395 417v3h1v-3z" fill="#778899"/><path d="M427 297v3h1v-3zM427 303v3h1v-3zM427 309v3h1v-3zM427 315v3h1v-3zM427 321v3h1v-3zM427 327v3h1v-3zM427 333v3h1v-3zM427 339v3h1v-3zM427 345v3h1v-3zM427 351v3h1v-3zM427 357v3h1v-3zM427 363v3h1v-3zM427 369v3h1v-3zM427 375v3h1v-3zM427 381v3h1v-3zM427 387v3h1v-3zM427 393v3h1v-3zM427 399v3h1v-3zM427 405v3h1v-3zM427 411v3h1v-3zM427 417v3h1v-3z" fill="#778899"/><path d="M459 297v3h1v-3zM459 303v3h1v-3zM459 309v3h1v-3zM459 315v3h1v-3zM459 321v3h1v-3zM459 327v3h1v-3zM459 333v3h1v-3zM459 339v3h1v-3zM459 345v3h1v-3zM459 351v3h1v-3zM459 357v3h1v-3zM459 363v3h1v-3zM459 369v3h1v-3zM459 375v3h1v-3zM459 381v3h1v-3zM459 387v3h1v-3zM459 393v3h1v-3zM459 399v3h1v-3zM459 405v3h1v-3zM459 411v3h1v-3zM459 417v3h1v-3z" fill="#778899"/><path d="M491 297v3h1v-3zM491 303v3h1v-3zM491 309v3h1v-3zM491 315v3h1v-3zM491 321v3h1v-3zM491 327v3h1v-3zM491 333v3h1v-3zM491 339v3h1v-3zM491 345v3h1v-3zM491 351v3h1v-3zM491 357v3h1v-3zM491 363v3h1v-3zM491 369v3h1v-3zM491 375v3h1v-3zM491 381v3h1v-3zM491 387v3h1v-3zM491 393v3h1v-3zM491 399v3h1v-3zM491 405v3h1v-3zM491 411v3h1v-3zM491 417v3h1v-3z" fill="#778899"/><path d="M523 297v3h1v-3zM523 303v3h1v-3zM523 309v3h1v-3zM523 315v3h1v-3zM523 321v3h1v-3zM523 327v3h1v-3zM523 333v3h1v-3zM523 339v3h1v-3zM523 345v3h1v-3zM523 351v3h1v-3zM523 357v3h1v-3zM523 363v3h1v-3zM523 369v3h1v-3zM523 375v3h1v-3zM523 381v3h1v-3zM523 387v3h1v-3zM523 393v3h1v-3zM523 399v3h1v-3zM523 405v3h1v-3zM523 411v3h1v-3zM523 417v3h1v-3z" fill="#778899"/><path d="M555 297v3h1v-3zM555 303v3h1v-3zM555 309v3h1v-3zM555 315v3h1v-3zM555 321v3h1v-3zM555 327v3h1v-3zM555 333v3h1v-3zM555 339v3h1v-3zM555 345v3h1v-3zM555 351v3h1v-3zM555 357v3h1v-3zM555 363v3h1v-3zM555 369v3h1v-3zM555 375v3h1v-3zM555 381v3h1v-3zM555 387v3h1v-3zM555 393v3h1v-3zM555 399v3h1v-3zM555 405v3h1v-3zM555 411v3h1v-3zM555 417v3h1v-3z" fill="#778899"/><path d="M587 297v3h1v-3zM587 303v3h1v-3zM587 309v3h1v-3zM587 315v3h1v-3zM587 321v3h1v-3zM587 327v3h1v-3zM587 333v3h1v-3zM587 339v3h1v-3zM587 345v3h1v-3zM587 351v3h1v-3zM587 357v3h1v-3zM587 363v3h1v-3zM587 369v3h1v-3zM587 375v3h1v-3zM587 381v3h1v-3zM587 387v3h1v-3zM587 393v3h1v-3zM587 399v3h1v-3zM587 405v3h1v-3zM587 411v3h1v-3zM587 417v3h1v-3z" fill="#778899"/><path d="M619 297v3h1v-3zM619 303v3h1v-3zM619 309v3h1v-3zM619 315v3h1v-3zM619 321v3h1v-3zM619 327v3h1v-3zM619 333v3h1v-3zM619 339v3h1v-3zM619 345v3h1v-3zM619 351v3h1v-3zM619 357v3h1v-3zM619 363v3h1v-3zM619 369v3h1v-3zM619 375v3h1v-3zM619 381v3h1v-3zM619 387v3h1v-3zM619 393v3h1v-3zM619 399v3h1v-3zM619 405v3h1v-3zM619 411v3h1v-3zM619 417v3h1v-3z" fill="#778899"/><path d="M651 297v3h1v-3zM651 303v3h1v-3zM651 309v3h1v-3zM651 315v3h1v-3zM651 321v3h1v-3zM651 327v3h1v-3zM651 333v3h1v-3zM651 339v3h1v-3zM651 345v3h1v-3zM651 351v3h1v-3zM651 357v3h1v-3zM651 363v3h1v-3zM651 369v3h1v-3zM651 375v3h1v-3zM651 381v3h1v-3zM651 387v3h1v-3zM651 393v3h1v-3zM651 399v3h1v-3zM651 405v3h1v-3zM651 411v3h1v-3zM651 417v3h1v-3z" fill="#778899"/><path d="M43 424v2h1v-2zM43 429v3h1v-3zM43 435v3h1v-3zM43 441v3h1v-3zM43 447v3h1v-3zM43 453v3h1v-3zM43 459v3h1v-3zM43 465v3h1v-3zM43 471v3h1v-3zM43 477v3h1v-3zM43 483v3h1v-3zM43 489v3h1v-3zM43 495v3h1v-3zM43 501v3h1v-3zM43 507v3h1v-3zM43 513v3h1v-3zM43 519v3h1v-3zM43 525v3h1v-3zM43 531v3h1v-3zM43 537v3h1v-3zM43 543v3h1v-3zM43 549v2h1v-2z" fill="#778899"/><path d="M75 424v2h1v-2zM75 429v3h1v-3zM75 435v3h1v-3zM75 441v3h1v-3zM75 447v3h1v-3zM75 453v3h1v-3zM75 459v3h1v-3zM75 465v3h1v-3zM75 471v3h1v-3zM75 477v3h1v-3zM75 483v3h1v-3zM75 489v3h1v-3zM75 495v3h1v-3zM75 501v3h1v-3zM75 507v3h1v-3zM75 513v3h1v-3zM75 519v3h1v-3zM75 525v3h1v-3zM75 531v3h1v-3zM75 537v3h1v-3zM75 543v3h1v-3zM75 549v2h1v-2z" fill="#778899"/><path d="M107 424v2h1v-2zM107 429v3h1v-3zM107 435v3h1v-3zM107 441v3h1v-3zM107 447v3h1v-3zM107 453v3h1v-3zM107 459v3h1v-3zM107 465v3h1v-3zM107 471v3h1v-3zM107 477v3h1v-3zM107 483v3h1v-3zM107 489v3h1v-3zM107 495v3h1v-3zM107 501v3h1v-3zM107 507v3h1v-3zM107 513v3h1v-3zM107 519v3h1v-3zM107 525v3h1v-3zM107 531v3h1v-3zM107 537v3h1v-3zM107 543v3h1v-3zM107 549v2h1v-2z" fill="#778899"/><path d="M139 424v2h1v-2zM139 429v3h1v-3zM139 435v3h1v-3zM139 441v3h1v-3zM139 447v3h1v-3zM139 453v3h1v-3zM139 459v3h1v-3zM139 465v3h1v-3zM139 471v3h1v-3zM139 477v3h1v-3zM139 483v3h1v-3zM139 489v3h1v-3zM139 495v3h1v-3zM139 501v3h1v-3zM139 507v3h1v-3zM139 513v3h1v-3zM139 519v3h1v-3zM139 525v3h1v-3zM139 531v3h1v-3zM139 537v3h1v-3zM139 543v3h1v-3zM139 549v2h1v-2z" fill="#778899"/><path d="M171 424v2h1v-2zM171 429v3h1v-3zM171 435v3h1v-3zM171 441v3h1v-3zM171 447v3h1v-3zM171 453v3h1v-3zM171 459v3h1v-3zM171 465v3h1v-3zM171 471v3h1v-3zM171 477v3h1v-3zM171 483v3h1v-3zM171 489v3h1v-3zM171 495v3h1v-3zM171 501v3h1v-3zM171 507v3h1v-3zM171 513v3h1v-3zM171 519v3h1v-3zM171 525v3h1v-3zM171 531v3h1v-3zM171 537v3h1v-3zM171 543v3h1v-3zM171 549v2h1v-2z" fill="#778899"/><path d="M203 424v2h1v-2zM203 429v3h1v-3zM203 435v3h1v-3zM203 441v3h1v-3zM203 447v3h1v-3zM203 453v3h1v-3zM203 459v3h1v-3zM203 465v3h1v-3zM203 471v3h1v-3zM203 477v3h1v-3zM203 483v3h1v-3zM203 489v3h1v-3zM203 495v3h1v-3zM203 501v3h1v-3zM203 507v3h1v-3zM203 513v3h1v-3zM203 519v3h1v-3zM203 525v3h1v-3zM203 531v3h1v-3zM203 537v3h1v-3zM203 543v3h1v-3zM203 549v2h1v-2z" fill="#778899"/><path d="M235 424v2h1v-2zM235 429v3h1v-3zM235 435v3h1v-3zM235 441v3h1v-3zM235 447v3h1v-3zM235 453v3h1v-3zM235 459v3h1v-3zM235 465v3h1v-3zM235 471v3h1v-3zM235 477v3h1v-3zM235 483v3h1v-3zM235 489v3h1v-3zM235 495v3h1v-3zM235 501v3h1v-3zM235 507v3h1v-3zM235 513v3h1v-3zM235 519v3h1v-3zM235 525v3h1v-3zM235 531v3h1v-3zM235 537v3h1v-3zM235 543v3h1v-3zM235 549v2h1v-2z" fill="#778899"/><path d="M267 424v2h1v-2zM267 429v3h1v-3zM267 435v3h1v-3zM267 441v3h1v-3zM267 447v3h1v-3zM267 453v3h1v-3zM267 459v3h1v-3zM267 465v3h1v-3zM267 471v3h1v-3zM267 477v3h1v-3zM267 483v3h1v-3zM267 489v3h1v-3zM267 495v3h1v-3zM267 501v3h1v-3zM267 507v3h1v-3zM267 513v3h1v-3zM267 519v3h1v-3zM267 525v3h1v-3zM267 531v3h1v-3zM267 537v3h1v-3zM267 543v3h1v-3zM267 549v2h1v-2z" fill="#778899"/><path d="M299 424v2h1v-2zM299 429v3h1v-3zM299 435v3h1v-3zM299 441v3h1v-3zM299 447v3h1v-3zM299 453v3h1v-3zM299 459v3h1v-3zM299 465v3h1v-3zM299 471v3h1v-3zM299 477v3h1v-3zM299 483v3h1v-3zM299 489v3h1v-3zM299 495v3h1v-3zM299 501v3h1v-3zM299 507v3h1v-3zM299 513v3h1v-3zM299 519v3h1v-3zM299 525v3h1v-3zM299 531v3h1v-3zM299 537v3h1v-3zM299 543v3h1v-3zM299 549v2h1v-2z" fill="#778899"/><path d="M331 424v2h1v-2zM331 429v3h1v-3zM331 435v3h1v-3zM331 441v3h1v-3zM331 447v3h1v-3zM331 453v3h1v-3zM331 459v3h1v-3zM331 465v3h1v-3zM331 471v3h1v-3zM331 477v3h1v-3zM331 483v3h1v-3zM331 489v3h1v-3zM331 495v3h1v-3zM331 501v3h1v-3zM331 507v3h1v-3zM331 513v3h1v-3zM331 519v3h1v-3zM331 525v3h1v-3zM331 531v3h1v-3zM331 537v3h1v-3zM331 543v3h1v-3zM331 549v2h1v-2z" fill="#778899"/><path d="M363 424v2h1v-2zM363 429v3h1v-3zM363 435v3h1v-3zM363 441v3h1v-3zM363 447v3h1v-3zM363 453v3h1v-3zM363 459v3h1v-3zM363 465v3h1v-3zM363 471v3h1v-3zM363 477v3h1v-3zM363 483v3h1v-3zM363 489v3h1v-3zM363 495v3h1v-3zM363 501v3h1v-3zM363 507v3h1v-3zM363 513v3h1v-3zM363 519v3h1v-3zM363 525v3h1v-3zM363 531v3h1v-3zM363 537v3h1v-3zM363 543v3h1v-3zM363 549v2h1v-2z" fill="#778899"/><path d="M395 424v2h1v-2zM395 429v3h1v-3zM395 435v3h1v-3zM395 441v3h1v-3zM395 447v3h1v-3zM395 453v3h1v-3zM395 459v3h1v-3zM395 465v3h1v-3zM395 471v3h1v-3zM395 477v3h1v-3zM395 483v3h1v-3zM395 489v3h1v-3zM395 495v3h1v-3zM395 501v3h1v-3zM395 507v3h1v-3zM395 513v3h1v-3zM395 519v3h1v-3zM395 525v3h1v-3zM395 531v3h1v-3zM395 537v3h1v-3zM395 543v3h1v-3zM395 549v2h1v-2z" fill="#778899"/><path d="M427 424v2h1v-2zM427 429v3h1v-3zM427 435v3h1v-3zM427 441v3h1v-3zM427 447v3h1v-3zM427 453v3h1v-3zM427 459v3h1v-3zM427 465v3h1v-3zM427 471v3h1v-3zM427 477v3h1v-3zM427 483v3h1v-3zM427 489v3h1v-3zM427 495v3h1v-3zM427 501v3h1v-3zM427 507v3h1v-3zM427 513v3h1v-3zM427 519v3h1v-3zM427 525v3h1v-3zM427 531v3h1v-3zM427 537v3h1v-3zM427 543v3h1v-3zM427 549v2h1v-2z" fill="#778899"/><path d="M459 424v2h1v-2zM459 429v3h1v-3zM459 435v3h1v-3zM459 441v3h1v-3zM459 447v3h1v-3zM459 453v3h1v-3zM459 459v3h1v-3zM459 465v3h1v-3zM459 471v3h1v-3zM459 477v3h1v-3zM459 483v3h1v-3zM459 489v3h1v-3zM459 495v3h1v-3zM459 501v3h1v-3zM459 507v3h1v-3zM459 513v3h1v-3zM459 519v3h1v-3zM459 525v3h1v-3zM459 531v3h1v-3zM459 537v3h1v-3zM459 543v3h1v-3zM459 549v2h1v-2z" fill="#778899"/><path d="M491 424v2h1v-2zM491 429v3h1v-3zM491 435v3h1v-3zM491 441v3h1v-3zM491 447v3h1v-3zM491 453v3h1v-3zM491 459v3h1v-3zM491 465v3h1v-3zM491 471v3h1v-3zM491 477v3h1v-3zM491 483v3h1v-3zM491 489v3h1v-3zM491 495v3h1v-3zM491 501v3h1v-3zM491 507v3h1v-3zM491 513v3h1v-3zM491 519v3h1v-3zM491 525v3h1v-3zM491 531v3h1v-3zM491 537v3h1v-3zM491 543v3h1v-3zM491 549v2h1v-2z" fill="#778899"/><path d="M523 424v2h1v-2zM523 429v3h1v-3zM523 435v3h1v-3zM523 441v3h1v-3zM523 447v3h1v-3zM523 453v3h1v-3zM523 459v3h1v-3zM523 465v3h1v-3zM523 471v3h1v-3zM523 477v3h1v-3zM523 483v3h1v-3zM523 489v3h1v-3zM523 495v3h1v-3zM523 501v3h1v-3zM523 507v3h1v-3zM523 513v3h1v-3zM523 519v3h1v-3zM523 525v3h1v-3zM523 531v3h1v-3zM523 537v3h1v-3zM523 543v3h1v-3zM523 549v2h1v-2z" fill="#778899"/><path d="M555 424v2h1v-2zM555 429v3h1v-3zM555 435v3h1v-3zM555 441v3h1v-3zM555 447v3h1v-3zM555 453v3h1v-3zM555 459v3h1v-3zM555 465v3h1v-3zM555 471v3h1v-3zM555 477v3h1v-3zM555 483v3h1v-3zM555 489v3h1v-3zM555 495v3h1v-3zM555 501v3h1v-3zM555 507v3h1v-3zM555 513v3h1v-3zM555 519v3h1v-3zM555 525v3h1v-3zM555 531v3h1v-3zM555 537v3h1v-3zM555 543v3h1v-3zM555 549v2h1v-2z" fill="#778899"/><path d="M587 424v2h1v-2zM587 429v3h1v-3zM587 435v3h1v-3zM587 441v3h1v-3zM587 447v3h1v-3zM587 453v3h1v-3zM587 459v3h1v-3zM587 465v3h1v-3zM587 471v3h1v-3zM587 477v3h1v-3zM587 483v3h1v-3zM587 489v3h1v-3zM587 495v3h1v-3zM587 501v3h1v-3zM587 507v3h1v-3zM587 513v3h1v-3zM587 519v3h1v-3zM587 525v3h1v-3zM587 531v3h1v-3zM587 537v3h1v-3zM587 543v3h1v-3zM587 549v2h1v-2z" fill="#778899"/><path d="M619 424v2h1v-2zM619 429v3h1v-3zM619 435v3h1v-3zM619 441v3h1v-3zM619 447v3h1v-3zM619 453v3h1v-3zM619 459v3h1v-3zM619 465v3h1v-3zM619 471v3h1v-3zM619 477v3h1v-3zM619 483v3h1v-3zM619 489v3h1v-3zM619 495v3h1v-3zM619 501v3h1v-3zM619 507v3h1v-3zM619 513v3h1v-3zM619 519v3h1v-3zM619 525v3h1v-3zM619 531v3h1v-3zM619 537v3h1v-3zM619 543v3h1v-3zM619 549v2h1v-2z" fill="#778899"/><path d="M651 424v2h1v-2zM651 429v3h1v-3zM651 435v3h1v-3zM651 441v3h1v-3zM651 447v3h1v-3zM651 453v3h1v-3zM651 459v3h1v-3zM651 465v3h1v-3zM651 471v3h1v-3zM651 477v3h1v-3zM651 483v3h1v-3zM651 489v3h1v-3zM651 495v3h1v-3zM651 501v3h1v-3zM651 507v3h1v-3zM651 513v3h1v-3zM651 519v3h1v-3zM651 525v3h1v-3zM651 531v3h1v-3zM651 537v3h1v-3zM651 543v3h1v-3zM651 549v2h1v-2z" fill="#778899"/><path d="M12 57h3v1h-3zM18 57h3v1h-3zM24 57h3v1h-3zM30 57h3v1h-3zM36 57h3v1h-3zM42 57h3v1h-3zM48 57h3v1h-3zM54 57h3v1h-3zM60 57h3v1h-3zM66 57h3v1h-3zM72 57h3v1h-3zM78 57h3v1h-3zM84 57h3v1h-3zM90 57h3v1h-3zM96 57h3v1h-3zM102 57h3v1h-3zM108 57h3v1h-3zM114 57h3v1h-3zM120 57h3v1h-3zM126 57h3v1h-3zM132 57h3v1h-3zM138 57h3v1h-3zM144 57h3v1h-3zM150 57h3v1h-3zM156 57h3v1h-3zM162 57h3v1h-3zM168 57h3v1h-3zM174 57h3v1h-3zM180 57h3v1h-3zM186 57h3v1h-3zM192 57h3v1h-3zM198 57h3v1h-3zM204 57h3v1h-3zM210 57h3v1h-3zM216 57h3v1h-3zM222 57h3v1h-3zM228 57h3v1h-3zM234 57h3v1h-3zM240 57h3v1h-3zM246 57h3v1h-3zM252 57h3v1h-3zM258 57h3v1h-3zM264 57h3v1h-3zM270 57h3v1h-3zM276 57h3v1h-3zM282 57h3v1h-3zM288 57h3v1h-3zM294 57h3v1h-3zM300 57h3v1h-3zM306 57h3v1h-3zM312 57h3v1h-3zM318 57h3v1h-3zM324 57h3v1h-3zM330 57h3v1h-3zM336 57h3v1h-3zM342 57h3v1h-3zM348 57h3v1h-3zM354 57h3v1h-3zM360 57h3v1h-3zM366 57h3v1h-3zM372 57h3v1h-3zM378 57h3v1h-3zM384 57h3v1h-3zM390 57h3v1h-3zM396 57h3v1h-3zM402 57h3v1h-3zM408 57h3v1h-3zM414 57h3v1h-3zM420 57h3v1h-3zM426 57h3v1h-3zM432 57h3v1h-3zM438 57h3v1h-3zM444 57h3v1h-3zM450 57h3v1h-3zM456 57h3v1h-3zM462 57h3v1h-3zM468 57h3v1h-3zM474 57h3v1h-3zM480 57h3v1h-3zM486 57h3v1h-3zM492 57h3v1h-3zM498 57h3v1h-3zM504 57h3v1h-3zM510 57h3v1h-3zM516 57h3v1h-3zM522 57h3v1h-3zM528 57h3v1h-3zM534 57h3v1h-3zM540 57h3v1h-3zM546 57h3v1h-3zM552 57h3v1h-3zM558 57h3v1h-3zM564 57h3v1h-3zM570 57h3v1h-3zM576 57h3v1h-3zM582 57h3v1h-3zM588 57h3v1h-3zM594 57h3v1h-3zM600 57h3v1h-3zM606 57h3v1h-3zM612 57h3v1h-3zM618 57h3v1h-3zM624 57h3v1h-3zM630 57h3v1h-3zM636 57h3v1h-3zM642 57h3v1h-3zM648 57h3v1h-3zM654 57h3v1h-3zM660 57h3v1h-3zM666 57h3v1h-3zM672 57h3v1h-3z" fill="#778899"/><path d="M12 90h3v1h-3zM18 90h3v1h-3zM24 90h3v1h-3zM30 90h3v1h-3zM36 90h3v1h-3zM42 90h3v1h-3zM48 90h3v1h-3zM54 90h3v1h-3zM60 90h3v1h-3zM66 90h3v1h-3zM72 90h3v1h-3zM78 90h3v1h-3zM84 90h3v1h-3zM90 90h3v1h-3zM96 90h3v1h-3zM102 90h3v1h-3zM108 90h3v1h-3zM114 90h3v1h-3zM120 90h3v1h-3zM126 90h3v1h-3zM132 90h3v1h-3zM138 90h3v1h-3zM144 90h3v1h-3zM150 90h3v1h-3zM156 90h3v1h-3zM162 90h3v1h-3zM168 90h3v1h-3zM174 90h3v1h-3zM180 90h3v1h-3zM186 90h3v1h-3zM192 90h3v1h-3zM198 90h3v1h-3zM204 90h3v1h-3zM210 90h3v1h-3zM216 90h3v1h-3zM222 90h3v1h-3zM228 90h3v1h-3zM234 90h3v1h-3zM240 90h3v1h-3zM246 90h3v1h-3zM252 90h3v1h-3zM258 90h3v1h-3zM264 90h3v1h-3zM270 90h3v1h-3zM276 90h3v1h-3zM282 90h3v1h-3zM288 90h3v1h-3zM294 90h3v1h-3zM300 90h3v1h-3zM306 90h3v1h-3zM312 90h3v1h-3zM318 90h3v1h-3zM324 90h3v1h-3zM330 90h3v1h-3zM336 90h3v1h-3zM342 90h3v1h-3zM348 90h3v1h-3zM354 90h3v1h-3zM360 90h3v1h-3zM366 90h3v1h-3zM372 90h3v1h-3zM378 90h3v1h-3zM384 90h3v1h-3zM390 90h3v1h-3zM396 90h3v1h-3zM402 90h3v1h-3zM408 90h3v1h-3zM414 90h3v1h-3zM420 90h3v1h-3zM426 90h3v1h-3zM432 90h3v1h-3zM438 90h3v1h-3zM444 90h3v1h-3zM450 90h3v1h-3zM456 90h3v1h-3zM462 90h3v1h-3zM468 90h3v1h-3zM474 90h3v1h-3zM480 90h3v1h-3zM486 90h3v1h-3zM492 90h3v1h-3zM498 90h3v1h-3zM504 90h3v1h-3zM510 90h3v1h-3zM516 90h3v1h-3zM522 90h3v1h-3zM528 90h3v1h-3zM534 90h3v1h-3zM540 90h3v1h-3zM546 90h3v1h-3zM552 90h3v1h-3zM558 90h3v1h-3zM564 90h3v1h-3zM570 90h3v1h-3zM576 90h3v1h-3zM582 90h3v1h-3zM588 90h3v1h-3zM594 90h3v1h-3zM600 90h3v1h-3zM606 90h3v1h-3zM612 90h3v1h-3zM618 90h3v1h-3zM624 90h3v1h-3zM630 90h3v1h-3zM636 90h3v1h-3zM642 90h3v1h-3zM648 90h3v1h-3zM654 90h3v1h-3zM660 90h3v1h-3zM666 90h3v1h-3zM672 90h3v1h-3z" fill="#778899"/><path d="M12 123h3v1h-3zM18 123h3v1h-3zM24 123h3v1h-3zM30 123h3v1h-3zM36 123h3v1h-3zM42 123h3v1h-3zM48 123h3v1h-3zM54 123h3v1h-3zM60 123h3v1h-3zM66 123h3v1h-3zM72 123h3v1h-3zM78 123h3v1h-3zM84 123h3v1h-3zM90 123h3v1h-3zM96 123h3v1h-3zM102 123h3v1h-3zM108 123h3v1h-3zM114 123h3v1h-3zM120 123h3v1h-3zM126 123h3v1h-3zM132 123h3v1h-3zM138 123h3v1h-3zM144 123h3v1h-3zM150 123h3v1h-3zM156 123h3v1h-3zM162 123h3v1h-3zM168 123h3v1h-3zM174 123h3v1h-3zM180 123h3v1h-3zM186 123h3v1h-3zM192 123h3v1h-3zM198 123h3v1h-3zM204 123h3v1h-3zM210 123h3v1h-3zM216 123h3v1h-3zM222 123h3v1h-3zM228 123h3v1h-3zM234 123h3v1h-3zM240 123h3v1h-3zM246 123h3v1h-3zM252 123h3v1h-3zM258 123h3v1h-3zM264 123h3v1h-3zM270 123h3v1h-3zM276 123h3v1h-3zM282 123h3v1h-3zM288 123h3v1h-3zM294 123h3v1h-3zM300 123h3v1h-3zM306 123h3v1h-3zM312 123h3v1h-3zM318 123h3v1h-3zM324 123h3v1h-3zM330 123h3v1h-3zM336 123h3v1h-3zM342 123h3v1h-3zM348 123h3v1h-3zM354 123h3v1h-3zM360 123h3v1h-3zM366 123h3v1h-3zM372 123h3v1h-3zM378 123h3v1h-3zM384 123h3v1h-3zM390 123h3v1h-3zM396 123h3v1h-3zM402 123h3v1h-3zM408 123h3v1h-3zM414 123h3v1h-3zM420 123h3v1h-3zM426 123h3v1h-3zM432 123h3v1h-3zM438 123h3v1h-3zM444 123h3v1h-3zM450 123h3v1h-3zM456 123h3v1h-3zM462 123h3v1h-3zM468 123h3v1h-3zM474 123h3v1h-3zM480 123h3v1h-3zM486 123h3v1h-3zM492 123h3v1h-3zM498 123h3v1h-3zM504 123h3v1h-3zM510 123h3v1h-3zM516 123h3v1h-3zM522 123h3v1h-3zM528 123h3v1h-3zM534 123h3v1h-3zM540 123h3v1h-3zM546 123h3v1h-3zM552 123h3v1h-3zM558 123h3v1h-3zM564 123h3v1h-3zM570 123h3v1h-3zM576 123h3v1h-3zM582 123h3v1h-3zM588 123h3v1h-3zM594 123h3v1h-3zM600 123h3v1h-3zM606 123h3v1h-3zM612 123h3v1h-3zM618 123h3v1h-3zM624 123h3v1h-3zM630 123h3v1h-3zM636 123h3v1h-3zM642 123h3v1h-3zM648 123h3v1h-3zM654 123h3v1h-3zM660 123h3v1h-3zM666 123h3v1h-3zM672 123h3v1h-3z" fill="#778899"/><path d="M12 156h3v1h-3zM18 156h3v1h-3zM24 156h3v1h-3zM30 156h3v1h-3zM36 156h3v1h-3zM42 156h3v1h-3zM48 156h3v1h-3zM54 156h3v1h-3zM60 156h3v1h-3zM66 156h3v1h-3zM72 156h3v1h-3zM78 156h3v1h-3zM84 156h3v1h-3zM90 156h3v1h-3zM96 156h3v1h-3zM102 156h3v1h-3zM108 156h3v1h-3zM114 156h3v1h-3zM120 156h3v1h-3zM126 156h3v1h-3zM132 156h3v1h-3zM138 156h3v1h-3zM144 156h3v1h-3zM150 156h3v1h-3zM156 156h3v1h-3zM162 156h3v1h-3zM168 156h3v1h-3zM174 156h3v1h-3zM180 156h3v1h-3zM186 156h3v1h-3zM192 156h3v1h-3zM198 156h3v1h-3zM204 156h3v1h-3zM210 156h3v1h-3zM216 156h3v1h-3zM222 156h3v1h-3zM228 156h3v1h-3zM234 156h3v1h-3zM240 156h3v1h-3zM246 156h3v1h-3zM252 156h3v1h-3zM258 156h3v1h-3zM264 156h3v1h-3zM270 156h3v1h-3zM276 156h3v1h-3zM282 156h3v1h-3zM288 156h3v1h-3zM294 156h3v1h-3zM300 156h3v1h-3zM306 156h3v1h-3zM312 156h3v1h-3zM318 156h3v1h-3zM324 156h3v1h-3zM330 156h3v1h-3zM336 156h3v1h-3zM342 156h3v1h-3zM348 156h3v1h-3zM354 156h3v1h-3zM360 156h3v1h-3zM366 156h3v1h-3zM372 156h3v1h-3zM378 156h3v1h-3zM384 156h3v1h-3zM390 156h3v1h-3zM396 156h3v1h-3zM402 156h3v1h-3zM408 156h3v1h-3zM414 156h3v1h-3zM420 156h3v1h-3zM426 156h3v1h-3zM432 156h3v1h-3zM438 156h3v1h-3zM444 156h3v1h-3zM450 156h3v1h-3zM456 156h3v1h-3zM462 156h3v1h-3zM468 156h3v1h-3zM474 156h3v1h-3zM480 156h3v1h-3zM486 156h3v1h-3zM492 156h3v1h-3zM498 156h3v1h-3zM504 156h3v1h-3zM510 156h3v1h-3zM516 156h3v1h-3zM522 156h3v1h-3zM528 156h3v1h-3zM534 156h3v1h-3zM540 156h3v1h-3zM546 156h3v1h-3zM552 156h3v1h-3zM558 156h3v1h-3zM564 156h3v1h-3zM570 156h3v1h-3zM576 156h3v1h-3zM582 156h3v1h-3zM588 156h3v1h-3zM594 156h3v1h-3zM600 156h3v1h-3zM606 156h3v1h-3zM612 156h3v1h-3zM618 156h3v1h-3zM624 156h3v1h-3zM630 156h3v1h-3zM636 156h3v1h-3zM642 156h3v1h-3zM648 156h3v1h-3zM654 156h3v1h-3zM660 156h3v1h-3zM666 156h3v1h-3zM672 156h3v1h-3z" fill="#778899"/><path d="M12 189h3v1h-3zM18 189h3v1h-3zM24 189h3v1h-3zM30 189h3v1h-3zM36 189h3v1h-3zM42 189h3v1h-3zM48 189h3v1h-3zM54 189h3v1h-3zM60 189h3v1h-3zM66 189h3v1h-3zM72 189h3v1h-3zM78 189h3v1h-3zM84 189h3v1h-3zM90 189h3v1h-3zM96 189h3v1h-3zM102 189h3v1h-3zM108 189h3v1h-3zM114 189h3v1h-3zM120 189h3v1h-3zM126 189h3v1h-3zM132 189h3v1h-3zM138 189h3v1h-3zM144 189h3v1h-3zM150 189h3v1h-3zM156 189h3v1h-3zM162 189h3v1h-3zM168 189h3v1h-3zM174 189h3v1h-3zM180 189h3v1h-3zM186 189h3v1h-3zM192 189h3v1h-3zM198 189h3v1h-3zM204 189h3v1h-3zM210 189h3v1h-3zM216 189h3v1h-3zM222 189h3v1h-3zM228 189h3v1h-3zM234 189h3v1h-3zM240 189h3v1h-3zM246 189h3v1h-3zM252 189h3v1h-3zM258 189h3v1h-3zM264 189h3v1h-3zM270 189h3v1h-3zM276 189h3v1h-3zM282 189h3v1h-3zM288 189h3v1h-3zM294 189h3v1h-3zM300 189h3v1h-3zM306 189h3v1h-3zM312 189h3v1h-3zM318 189h3v1h-3zM324 189h3v1h-3zM330 189h3v1h-3zM336 189h3v1h-3zM342 189h3v1h-3zM348 189h3v1h-3zM354 189h3v1h-3zM360 189h3v1h-3zM366 189h3v1h-3zM372 189h3v1h-3zM378 189h3v1h-3zM384 189h3v1h-3zM390 189h3v1h-3zM396 189h3v1h-3zM402 189h3v1h-3zM408 189h3v1h-3zM414 189h3v1h-3zM420 189h3v1h-3zM426 189h3v1h-3zM432 189h3v1h-3zM438 189h3v1h-3zM444 189h3v1h-3zM450 189h3v1h-3zM456 189h3v1h-3zM462 189h3v1h-3zM468 189h3v1h-3zM474 189h3v1h-3zM480 189h3v1h-3zM486 189h3v1h-3zM492 189h3v1h-3zM498 189h3v1h-3zM504 189h3v1h-3zM510 189h3v1h-3zM516 189h3v1h-3zM522 189h3v1h-3zM528 189h3v1h-3zM534 189h3v1h-3zM540 189h3v1h-3zM546 189h3v1h-3zM552 189h3v1h-3zM558 189h3v1h-3zM564 189h3v1h-3zM570 189h3v1h-3zM576 189h3v1h-3zM582 189h3v1h-3zM588 189h3v1h-3zM594 189h3v1h-3zM600 189h3v1h-3zM606 189h3v1h-3zM612 189h3v1h-3zM618 189h3v1h-3zM624 189h3v1h-3zM630 189h3v1h-3zM636 189h3v1h-3zM642 189h3v1h-3zM648 189h3v1h-3zM654 189h3v1h-3zM660 189h3v1h-3zM666 189h3v1h-3zM672 189h3v1h-3z" fill="#778899"/><path d="M12 222h3v1h-3zM18 222h3v1h-3zM24 222h3v1h-3zM30 222h3v1h-3zM36 222h3v1h-3zM42 222h3v1h-3zM48 222h3v1h-3zM54 222h3v1h-3zM60 222h3v1h-3zM66 222h3v1h-3zM72 222h3v1h-3zM78 222h3v1h-3zM84 222h3v1h-3zM90 222h3v1h-3zM96 222h3v1h-3zM102 222h3v1h-3zM108 222h3v1h-3zM114 222h3v1h-3zM120 222h3v1h-3zM126 222h3v1h-3zM132 222h3v1h-3zM138 222h3v1h-3zM144 222h3v1h-3zM150 222h3v1h-3zM156 222h3v1h-3zM162 222h3v1h-3zM168 222h3v1h-3zM174 222h3v1h-3zM180 222h3v1h-3zM186 222h3v1h-3zM192 222h3v1h-3zM198 222h3v1h-3zM204 222h3v1h-3zM210 222h3v1h-3zM216 222h3v1h-3zM222 222h3v1h-3zM228 222h3v1h-3zM234 222h3v1h-3zM240 222h3v1h-3zM246 222h3v1h-3zM252 222h3v1h-3zM258 222h3v1h-3zM264 222h3v1h-3zM270 222h3v1h-3zM276 222h3v1h-3zM282 222h3v1h-3zM288 222h3v1h-3zM294 222h3v1h-3zM300 222h3v1h-3zM306 222h3v1h-3zM312 222h3v1h-3zM318 222h3v1h-3zM324 222h3v1h-3zM330 222h3v1h-3zM336 222h3v1h-3zM342 222h3v1h-3zM348 222h3v1h-3zM354 222h3v1h-3zM360 222h3v1h-3zM366 222h3v1h-3zM372 222h3v1h-3zM378 222h3v1h-3zM384 222h3v1h-3zM390 222h3v1h-3zM396 222h3v1h-3zM402 222h3v1h-3zM408 222h3v1h-3zM414 222h3v1h-3zM420 222h3v1h-3zM426 222h3v1h-3zM432 222h3v1h-3zM438 222h3v1h-3zM444 222h3v1h-3zM450 222h3v1h-3zM456 222h3v1h-3zM462 222h3v1h-3zM468 222h3v1h-3zM474 222h3v1h-3zM480 222h3v1h-3zM486 222h3v1h-3zM492 222h3v1h-3zM498 222h3v1h-3zM504 222h3v1h-3zM510 222h3v1h-3zM516 222h3v1h-3zM522 222h3v1h-3zM528 222h3v1h-3zM534 222h3v1h-3zM540 222h3v1h-3zM546 222h3v1h-3zM552 222h3v1h-3zM558 222h3v1h-3zM564 222h3v1h-3zM570 222h3v1h-3zM576 222h3v1h-3zM582 222h3v1h-3zM588 222h3v1h-3zM594 222h3v1h-3zM600 222h3v1h-3zM606 222h3v1h-3zM612 222h3v1h-3zM618 222h3v1h-3zM624 222h3v1h-3zM630 222h3v1h-3zM636 222h3v1h-3zM642 222h3v1h-3zM648 222h3v1h-3zM654 222h3v1h-3zM660 222h3v1h-3zM666 222h3v1h-3zM672 222h3v1h-3z" fill="#778899"/><path d="M12 255h3v1h-3zM18 255h3v1h-3zM24 255h3v1h-3zM30 255h3v1h-3zM36 255h3v1h-3zM42 255h3v1h-3zM48 255h3v1h-3zM54 255h3v1h-3zM60 255h3v1h-3zM66 255h3v1h-3zM72 255h3v1h-3zM78 255h3v1h-3zM84 255h3v1h-3zM90 255h3v1h-3zM96 255h3v1h-3zM102 255h3v1h-3zM108 255h3v1h-3zM114 255h3v1h-3zM120 255h3v1h-3zM126 255h3v1h-3zM132 255h3v1h-3zM138 255h3v1h-3zM144 255h3v1h-3zM150 255h3v1h-3zM156 255h3v1h-3zM162 255h3v1h-3zM168 255h3v1h-3zM174 255h3v1h-3zM180 255h3v1h-3zM186 255h3v1h-3zM192 255h3v1h-3zM198 255h3v1h-3zM204 255h3v1h-3zM210 255h3v1h-3zM216 255h3v1h-3zM222 255h3v1h-3zM228 255h3v1h-3zM234 255h3v1h-3zM240 255h3v1h-3zM246 255h3v1h-3zM252 255h3v1h-3zM258 255h3v1h-3zM264 255h3v1h-3zM270 255h3v1h-3zM276 255h3v1h-3zM282 255h3v1h-3zM288 255h3v1h-3zM294 255h3v1h-3zM300 255h3v1h-3zM306 255h3v1h-3zM312 255h3v1h-3zM318 255h3v1h-3zM324 255h3v1h-3zM330 255h3v1h-3zM336 255h3v1h-3zM342 255h3v1h-3zM348 255h3v1h-3zM354 255h3v1h-3zM360 255h3v1h-3zM366 255h3v1h-3zM372 255h3v1h-3zM378 255h3v1h-3zM384 255h3v1h-3zM390 255h3v1h-3zM396 255h3v1h-3zM402 255h3v1h-3zM408 255h3v1h-3zM414 255h3v1h-3zM420 255h3v1h-3zM426 255h3v1h-3zM432 255h3v1h-3zM438 255h3v1h-3zM444 255h3v1h-3zM450 255h3v1h-3zM456 255h3v1h-3zM462 255h3v1h-3zM468 255h3v1h-3zM474 255h3v1h-3zM480 255h3v1h-3zM486 255h3v1h-3zM492 255h3v1h-3zM498 255h3v1h-3zM504 255h3v1h-3zM510 255h3v1h-3zM516 255h3v1h-3zM522 255h3v1h-3zM528 255h3v1h-3zM534 255h3v1h-3zM540 255h3v1h-3zM546 255h3v1h-3zM552 255h3v1h-3zM558 255h3v1h-3zM564 255h3v1h-3zM570 255h3v1h-3zM576 255h3v1h-3zM582 255h3v1h-3zM588 255h3v1h-3zM594 255h3v1h-3zM600 255h3v1h-3zM606 255h3v1h-3zM612 255h3v1h-3zM618 255h3v1h-3zM624 255h3v1h-3zM630 255h3v1h-3zM636 255h3v1h-3zM642 255h3v1h-3zM648 255h3v1h-3zM654 255h3v1h-3zM660 255h3v1h-3zM666 255h3v1h-3zM672 255h3v1h-3z" fill="#778899"/><path d="M12 288h3v1h-3zM18 288h3v1h-3zM24 288h3v1h-3zM30 288h3v1h-3zM36 288h3v1h-3zM42 288h3v1h-3zM48 288h3v1h-3zM54 288h3v1h-3zM60 288h3v1h-3zM66 288h3v1h-3zM72 288h3v1h-3zM78 288h3v1h-3zM84 288h3v1h-3zM90 288h3v1h-3zM96 288h3v1h-3zM102 288h3v1h-3zM108 288h3v1h-3zM114 288h3v1h-3zM120 288h3v1h-3zM126 288h3v1h-3zM132 288h3v1h-3zM138 288h3v1h-3zM144 288h3v1h-3zM150 288h3v1h-3zM156 288h3v1h-3zM162 288h3v1h-3zM168 288h3v1h-3zM174 288h3v1h-3zM180 288h3v1h-3zM186 288h3v1h-3zM192 288h3v1h-3zM198 288h3v1h-3zM204 288h3v1h-3zM210 288h3v1h-3zM216 288h3v1h-3zM222 288h3v1h-3zM228 288h3v1h-3zM234 288h3v1h-3zM240 288h3v1h-3zM246 288h3v1h-3zM252 288h3v1h-3zM258 288h3v1h-3zM264 288h3v1h-3zM270 288h3v1h-3zM276 288h3v1h-3zM282 288h3v1h-3zM288 288h3v1h-3zM294 288h3v1h-3zM300 288h3v1h-3zM306 288h3v1h-3zM312 288h3v1h-3zM318 288h3v1h-3zM324 288h3v1h-3zM330 288h3v1h-3zM336 288h3v1h-3zM342 288h3v1h-3zM348 288h3v1h-3zM354 288h3v1h-3zM360 288h3v1h-3zM366 288h3v1h-3zM372 288h3v1h-3zM378 288h3v1h-3zM384 288h3v1h-3zM390 288h3v1h-3zM396 288h3v1h-3zM402 288h3v1h-3zM408 288h3v1h-3zM414 288h3v1h-3zM420 288h3v1h-3zM426 288h3v1h-3zM432 288h3v1h-3zM438 288h3v1h-3zM444 288h3v1h-3zM450 288h3v1h-3zM456 288h3v1h-3zM462 288h3v1h-3zM468 288h3v1h-3zM474 288h3v1h-3zM480 288h3v1h-3zM486 288h3v1h-3zM492 288h3v1h-3zM498 288h3v1h-3zM504 288h3v1h-3zM510 288h3v1h-3zM516 288h3v1h-3zM522 288h3v1h-3zM528 288h3v1h-3zM534 288h3v1h-3zM540 288h3v1h-3zM546 288h3v1h-3zM552 288h3v1h-3zM558 288h3v1h-3zM564 288h3v1h-3zM570 288h3v1h-3zM576 288h3v1h-3zM582 288h3v1h-3zM588 288h3v1h-3zM594 288h3v1h-3zM600 288h3v1h-3zM606 288h3v1h-3zM612 288h3v1h-3zM618 288h3v1h-3zM624 288h3v1h-3zM630 288h3v1h-3zM636 288h3v1h-3zM642 288h3v1h-3zM648 288h3v1h-3zM654 288h3v1h-3zM660 288h3v1h-3zM666 288h3v1h-3zM672 288h3v1h-3z" fill="#778899"/><path d="M12 493h3v1h-3zM18 493h3v1h-3zM24 493h3v1h-3zM30 493h3v1h-3zM36 493h3v1h-3zM42 493h3v1h-3zM48 493h3v1h-3zM54 493h3v1h-3zM60 493h3v1h-3zM66 493h3v1h-3zM72 493h3v1h-3zM78 493h3v1h-3zM84 493h3v1h-3zM90 493h3v1h-3zM96 493h3v1h-3zM102 493h3v1h-3zM108 493h3v1h-3zM114 493h3v1h-3zM120 493h3v1h-3zM126 493h3v1h-3zM132 493h3v1h-3zM138 493h3v1h-3zM144 493h3v1h-3zM150 493h3v1h-3zM156 493h3v1h-3zM162 493h3v1h-3zM168 493h3v1h-3zM174 493h3v1h-3zM180 493h3v1h-3zM186 493h3v1h-3zM192 493h3v1h-3zM198 493h3v1h-3zM204 493h3v1h-3zM210 493h3v1h-3zM216 493h3v1h-3zM222 493h3v1h-3zM228 493h3v1h-3zM234 493h3v1h-3zM240 493h3v1h-3zM246 493h3v1h-3zM252 493h3v1h-3zM258 493h3v1h-3zM264 493h3v1h-3zM270 493h3v1h-3zM276 493h3v1h-3zM282 493h3v1h-3zM288 493h3v1h-3zM294 493h3v1h-3zM300 493h3v1h-3zM306 493h3v1h-3zM312 493h3v1h-3zM318 493h3v1h-3zM324 493h3v1h-3zM330 493h3v1h-3zM336 493h3v1h-3zM342 493h3v1h-3zM348 493h3v1h-3zM354 493h3v1h-3zM360 493h3v1h-3zM366 493h3v1h-3zM372 493h3v1h-3zM378 493h3v1h-3zM384 493h3v1h-3zM390 493h3v1h-3zM396 493h3v1h-3zM402 493h3v1h-3zM408 493h3v1h-3zM414 493h3v1h-3zM420 493h3v1h-3zM426 493h3v1h-3zM432 493h3v1h-3zM438 493h3v1h-3zM444 493h3v1h-3zM450 493h3v1h-3zM456 493h3v1h-3zM462 493h3v1h-3zM468 493h3v1h-3zM474 493h3v1h-3zM480 493h3v1h-3zM486 493h3v1h-3zM492 493h3v1h-3zM498 493h3v1h-3zM504 493h3v1h-3zM510 493h3v1h-3zM516 493h3v1h-3zM522 493h3v1h-3zM528 493h3v1h-3zM534 493h3v1h-3zM540 493h3v1h-3zM546 493h3v1h-3zM552 493h3v1h-3zM558 493h3v1h-3zM564 493h3v1h-3zM570 493h3v1h-3zM576 493h3v1h-3zM582 493h3v1h-3zM588 493h3v1h-3zM594 493h3v1h-3zM600 493h3v1h-3zM606 493h3v1h-3zM612 493h3v1h-3zM618 493h3v1h-3zM624 493h3v1h-3zM630 493h3v1h-3zM636 493h3v1h-3zM642 493h3v1h-3zM648 493h3v1h-3zM654 493h3v1h-3zM660 493h3v1h-3zM666 493h3v1h-3zM672 493h3v1h-3z" fill="#778899"/><path d="M12 436h3v1h-3zM18 436h3v1h-3zM24 436h3v1h-3zM30 436h3v1h-3zM36 436h3v1h-3zM42 436h3v1h-3zM48 436h3v1h-3zM54 436h3v1h-3zM60 436h3v1h-3zM66 436h3v1h-3zM72 436h3v1h-3zM78 436h3v1h-3zM84 436h3v1h-3zM90 436h3v1h-3zM96 436h3v1h-3zM102 436h3v1h-3zM108 436h3v1h-3zM114 436h3v1h-3zM120 436h3v1h-3zM126 436h3v1h-3zM132 436h3v1h-3zM138 436h3v1h-3zM144 436h3v1h-3zM150 436h3v1h-3zM156 436h3v1h-3zM162 436h3v1h-3zM168 436h3v1h-3zM174 436h3v1h-3zM180 436h3v1h-3zM186 436h3v1h-3zM192 436h3v1h-3zM198 436h3v1h-3zM204 436h3v1h-3zM210 436h3v1h-3zM216 436h3v1h-3zM222 436h3v1h-3zM228 436h3v1h-3zM234 436h3v1h-3zM240 436h3v1h-3zM246 436h3v1h-3zM252 436h3v1h-3zM258 436h3v1h-3zM264 436h3v1h-3zM270 436h3v1h-3zM276 436h3v1h-3zM282 436h3v1h-3zM288 436h3v1h-3zM294 436h3v1h-3zM300 436h3v1h-3zM306 436h3v1h-3zM312 436h3v1h-3zM318 436h3v1h-3zM324 436h3v1h-3zM330 436h3v1h-3zM336 436h3v1h-3zM342 436h3v1h-3zM348 436h3v1h-3zM354 436h3v1h-3zM360 436h3v1h-3zM366 436h3v1h-3zM372 436h3v1h-3zM378 436h3v1h-3zM384 436h3v1h-3zM390 436h3v1h-3zM396 436h3v1h-3zM402 436h3v1h-3zM408 436h3v1h-3zM414 436h3v1h-3zM420 436h3v1h-3zM426 436h3v1h-3zM432 436h3v1h-3zM438 436h3v1h-3zM444 436h3v1h-3zM450 436h3v1h-3zM456 436h3v1h-3zM462 436h3v1h-3zM468 436h3v1h-3zM474 436h3v1h-3zM480 436h3v1h-3zM486 436h3v1h-3zM492 436h3v1h-3zM498 436h3v1h-3zM504 436h3v1h-3zM510 436h3v1h-3zM516 436h3v1h-3zM522 436h3v1h-3zM528 436h3v1h-3zM534 436h3v1h-3zM540 436h3v1h-3zM546 436h3v1h-3zM552 436h3v1h-3zM558 436h3v1h-3zM564 436h3v1h-3zM570 436h3v1h-3zM576 436h3v1h-3zM582 436h3v1h-3zM588 436h3v1h-3zM594 436h3v1h-3zM600 436h3v1h-3zM606 436h3v1h-3zM612 436h3v1h-3zM618 436h3v1h-3zM624 436h3v1h-3zM630 436h3v1h-3zM636 436h3v1h-3zM642 436h3v1h-3zM648 436h3v1h-3zM654 436h3v1h-3zM660 436h3v1h-3zM666 436h3v1h-3zM672 436h3v1h-3z" fill="#c0c0c0"/><path d="M12 447h3v1h-3zM18 447h3v1h-3zM24 447h3v1h-3zM30 447h3v1h-3zM36 447h3v1h-3zM42 447h3v1h-3zM48 447h3v1h-3zM54 447h3v1h-3zM60 447h3v1h-3zM66 447h3v1h-3zM72 447h3v1h-3zM78 447h3v1h-3zM84 447h3v1h-3zM90 447h3v1h-3zM96 447h3v1h-3zM102 447h3v1h-3zM108 447h3v1h-3zM114 447h3v1h-3zM120 447h3v1h-3zM126 447h3v1h-3zM132 447h3v1h-3zM138 447h3v1h-3zM144 447h3v1h-3zM150 447h3v1h-3zM156 447h3v1h-3zM162 447h3v1h-3zM168 447h3v1h-3zM174 447h3v1h-3zM180 447h3v1h-3zM186 447h3v1h-3zM192 447h3v1h-3zM198 447h3v1h-3zM204 447h3v1h-3zM210 447h3v1h-3zM216 447h3v1h-3zM222 447h3v1h-3zM228 447h3v1h-3zM234 447h3v1h-3zM240 447h3v1h-3zM246 447h3v1h-3zM252 447h3v1h-3zM258 447h3v1h-3zM264 447h3v1h-3zM270 447h3v1h-3zM276 447h3v1h-3zM282 447h3v1h-3zM288 447h3v1h-3zM294 447h3v1h-3zM300 447h3v1h-3zM306 447h3v1h-3zM312 447h3v1h-3zM318 447h3v1h-3zM324 447h3v1h-3zM330 447h3v1h-3zM336 447h3v1h-3zM342 447h3v1h-3zM348 447h3v1h-3zM354 447h3v1h-3zM360 447h3v1h-3zM366 447h3v1h-3zM372 447h3v1h-3zM378 447h3v1h-3zM384 447h3v1h-3zM390 447h3v1h-3zM396 447h3v1h-3zM402 447h3v1h-3zM408 447h3v1h-3zM414 447h3v1h-3zM420 447h3v1h-3zM426 447h3v1h-3zM432 447h3v1h-3zM438 447h3v1h-3zM444 447h3v1h-3zM450 447h3v1h-3zM456 447h3v1h-3zM462 447h3v1h-3zM468 447h3v1h-3zM474 447h3v1h-3zM480 447h3v1h-3zM486 447h3v1h-3zM492 447h3v1h-3zM498 447h3v1h-3zM504 447h3v1h-3zM510 447h3v1h-3zM516 447h3v1h-3zM522 447h3v1h-3zM528 447h3v1h-3zM534 447h3v1h-3zM540 447h3v1h-3zM546 447h3v1h-3zM552 447h3v1h-3zM558 447h3v1h-3zM564 447h3v1h-3zM570 447h3v1h-3zM576 447h3v1h-3zM582 447h3v1h-3zM588 447h3v1h-3zM594 447h3v1h-3zM600 447h3v1h-3zM606 447h3v1h-3zM612 447h3v1h-3zM618 447h3v1h-3zM624 447h3v1h-3zM630 447h3v1h-3zM636 447h3v1h-3zM642 447h3v1h-3zM648 447h3v1h-3zM654 447h3v1h-3zM660 447h3v1h-3zM666 447h3v1h-3zM672 447h3v1h-3z" fill="#c0c0c0"/><path d="M12 465h3v1h-3zM18 465h3v1h-3zM24 465h3v1h-3zM30 465h3v1h-3zM36 465h3v1h-3zM42 465h3v1h-3zM48 465h3v1h-3zM54 465h3v1h-3zM60 465h3v1h-3zM66 465h3v1h-3zM72 465h3v1h-3zM78 465h3v1h-3zM84 465h3v1h-3zM90 465h3v1h-3zM96 465h3v1h-3zM102 465h3v1h-3zM108 465h3v1h-3zM114 465h3v1h-3zM120 465h3v1h-3zM126 465h3v1h-3zM132 465h3v1h-3zM138 465h3v1h-3zM144 465h3v1h-3zM150 465h3v1h-3zM156 465h3v1h-3zM162 465h3v1h-3zM168 465h3v1h-3zM174 465h3v1h-3zM180 465h3v1h-3zM186 465h3v1h-3zM192 465h3v1h-3zM198 465h3v1h-3zM204 465h3v1h-3zM210 465h3v1h-3zM216 465h3v1h-3zM222 465h3v1h-3zM228 465h3v1h-3zM234 465h3v1h-3zM240 465h3v1h-3zM246 465h3v1h-3zM252 465h3v1h-3zM258 465h3v1h-3zM264 465h3v1h-3zM270 465h3v1h-3zM276 465h3v1h-3zM282 465h3v1h-3zM288 465h3v1h-3zM294 465h3v1h-3zM300 465h3v1h-3zM306 465h3v1h-3zM312 465h3v1h-3zM318 465h3v1h-3zM324 465h3v1h-3zM330 465h3v1h-3zM336 465h3v1h-3zM342 465h3v1h-3zM348 465h3v1h-3zM354 465h3v1h-3zM360 465h3v1h-3zM366 465h3v1h-3zM372 465h3v1h-3zM378 465h3v1h-3zM384 465h3v1h-3zM390 465h3v1h-3zM396 465h3v1h-3zM402 465h3v1h-3zM408 465h3v1h-3zM414 465h3v1h-3zM420 465h3v1h-3zM426 465h3v1h-3zM432 465h3v1h-3zM438 465h3v1h-3zM444 465h3v1h-3zM450 465h3v1h-3zM456 465h3v1h-3zM462 465h3v1h-3zM468 465h3v1h-3zM474 465h3v1h-3zM480 465h3v1h-3zM486 465h3v1h-3zM492 465h3v1h-3zM498 465h3v1h-3zM504 465h3v1h-3zM510 465h3v1h-3zM516 465h3v1h-3zM522 465h3v1h-3zM528 465h3v1h-3zM534 465h3v1h-3zM540 465h3v1h-3zM546 465h3v1h-3zM552 465h3v1h-3zM558 465h3v1h-3zM564 465h3v1h-3zM570 465h3v1h-3zM576 465h3v1h-3zM582 465h3v1h-3zM588 465h3v1h-3zM594 465h3v1h-3zM600 465h3v1h-3zM606 465h3v1h-3zM612 465h3v1h-3zM618 465h3v1h-3zM624 465h3v1h-3zM630 465h3v1h-3zM636 465h3v1h-3zM642 465h3v1h-3zM648 465h3v1h-3zM654 465h3v1h-3zM660 465h3v1h-3zM666 465h3v1h-3zM672 465h3v1h-3z" fill="#c0c0c0"/><path d="M12 522h3v1h-3zM18 522h3v1h-3zM24 522h3v1h-3zM30 522h3v1h-3zM36 522h3v1h-3zM42 522h3v1h-3zM48 522h3v1h-3zM54 522h3v1h-3zM60 522h3v1h-3zM66 522h3v1h-3zM72 522h3v1h-3zM78 522h3v1h-3zM84 522h3v1h-3zM90 522h3v1h-3zM96 522h3v1h-3zM102 522h3v1h-3zM108 522h3v1h-3zM114 522h3v1h-3zM120 522h3v1h-3zM126 522h3v1h-3zM132 522h3v1h-3zM138 522h3v1h-3zM144 522h3v1h-3zM150 522h3v1h-3zM156 522h3v1h-3zM162 522h3v1h-3zM168 522h3v1h-3zM174 522h3v1h-3zM180 522h3v1h-3zM186 522h3v1h-3zM192 522h3v1h-3zM198 522h3v1h-3zM204 522h3v1h-3zM210 522h3v1h-3zM216 522h3v1h-3zM222 522h3v1h-3zM228 522h3v1h-3zM234 522h3v1h-3zM240 522h3v1h-3zM246 522h3v1h-3zM252 522h3v1h-3zM258 522h3v1h-3zM264 522h3v1h-3zM270 522h3v1h-3zM276 522h3v1h-3zM282 522h3v1h-3zM288 522h3v1h-3zM294 522h3v1h-3zM300 522h3v1h-3zM306 522h3v1h-3zM312 522h3v1h-3zM318 522h3v1h-3zM324 522h3v1h-3zM330 522h3v1h-3zM336 522h3v1h-3zM342 522h3v1h-3zM348 522h3v1h-3zM354 522h3v1h-3zM360 522h3v1h-3zM366 522h3v1h-3zM372 522h3v1h-3zM378 522h3v1h-3zM384 522h3v1h-3zM390 522h3v1h-3zM396 522h3v1h-3zM402 522h3v1h-3zM408 522h3v1h-3zM414 522h3v1h-3zM420 522h3v1h-3zM426 522h3v1h-3zM432 522h3v1h-3zM438 522h3v1h-3zM444 522h3v1h-3zM450 522h3v1h-3zM456 522h3v1h-3zM462 522h3v1h-3zM468 522h3v1h-3zM474 522h3v1h-3zM480 522h3v1h-3zM486 522h3v1h-3zM492 522h3v1h-3zM498 522h3v1h-3zM504 522h3v1h-3zM510 522h3v1h-3zM516 522h3v1h-3zM522 522h3v1h-3zM528 522h3v1h-3zM534 522h3v1h-3zM540 522h3v1h-3zM546 522h3v1h-3zM552 522h3v1h-3zM558 522h3v1h-3zM564 522h3v1h-3zM570 522h3v1h-3zM576 522h3v1h-3zM582 522h3v1h-3zM588 522h3v1h-3zM594 522h3v1h-3zM600 522h3v1h-3zM606 522h3v1h-3zM612 522h3v1h-3zM618 522h3v1h-3zM624 522h3v1h-3zM630 522h3v1h-3zM636 522h3v1h-3zM642 522h3v1h-3zM648 522h3v1h-3zM654 522h3v1h-3zM660 522h3v1h-3zM666 522h3v1h-3zM672 522h3v1h-3z" fill="#c0c0c0"/><path d="M12 539h3v1h-3zM18 539h3v1h-3zM24 539h3v1h-3zM30 539h3v1h-3zM36 539h3v1h-3zM42 539h3v1h-3zM48 539h3v1h-3zM54 539h3v1h-3zM60 539h3v1h-3zM66 539h3v1h-3zM72 539h3v1h-3zM78 539h3v1h-3zM84 539h3v1h-3zM90 539h3v1h-3zM96 539h3v1h-3zM102 539h3v1h-3zM108 539h3v1h-3zM114 539h3v1h-3zM120 539h3v1h-3zM126 539h3v1h-3zM132 539h3v1h-3zM138 539h3v1h-3zM144 539h3v1h-3zM150 539h3v1h-3zM156 539h3v1h-3zM162 539h3v1h-3zM168 539h3v1h-3zM174 539h3v1h-3zM180 539h3v1h-3zM186 539h3v1h-3zM192 539h3v1h-3zM198 539h3v1h-3zM204 539h3v1h-3zM210 539h3v1h-3zM216 539h3v1h-3zM222 539h3v1h-3zM228 539h3v1h-3zM234 539h3v1h-3zM240 539h3v1h-3zM246 539h3v1h-3zM252 539h3v1h-3zM258 539h3v1h-3zM264 539h3v1h-3zM270 539h3v1h-3zM276 539h3v1h-3zM282 539h3v1h-3zM288 539h3v1h-3zM294 539h3v1h-3zM300 539h3v1h-3zM306 539h3v1h-3zM312 539h3v1h-3zM318 539h3v1h-3zM324 539h3v1h-3zM330 539h3v1h-3zM336 539h3v1h-3zM342 539h3v1h-3zM348 539h3v1h-3zM354 539h3v1h-3zM360 539h3v1h-3zM366 539h3v1h-3zM372 539h3v1h-3zM378 539h3v1h-3zM384 539h3v1h-3zM390 539h3v1h-3zM396 539h3v1h-3zM402 539h3v1h-3zM408 539h3v1h-3zM414 539h3v1h-3zM420 539h3v1h-3zM426 539h3v1h-3zM432 539h3v1h-3zM438 539h3v1h-3zM444 539h3v1h-3zM450 539h3v1h-3zM456 539h3v1h-3zM462 539h3v1h-3zM468 539h3v1h-3zM474 539h3v1h-3zM480 539h3v1h-3zM486 539h3v1h-3zM492 539h3v1h-3zM498 539h3v1h-3zM504 539h3v1h-3zM510 539h3v1h-3zM516 539h3v1h-3zM522 539h3v1h-3zM528 539h3v1h-3zM534 539h3v1h-3zM540 539h3v1h-3zM546 539h3v1h-3zM552 539h3v1h-3zM558 539h3v1h-3zM564 539h3v1h-3zM570 539h3v1h-3zM576 539h3v1h-3zM582 539h3v1h-3zM588 539h3v1h-3zM594 539h3v1h-3zM600 539h3v1h-3zM606 539h3v1h-3zM612 539h3v1h-3zM618 539h3v1h-3zM624 539h3v1h-3zM630 539h3v1h-3zM636 539h3v1h-3zM642 539h3v1h-3zM648 539h3v1h-3zM654 539h3v1h-3zM660 539h3v1h-3zM666 539h3v1h-3zM672 539h3v1h-3z" fill="#c0c0c0"/><path d="M12 362h3v1h-3zM18 362h3v1h-3zM24 362h3v1h-3zM30 362h3v1h-3zM36 362h3v1h-3zM42 362h3v1h-3zM48 362h3v1h-3zM54 362h3v1h-3zM60 362h3v1h-3zM66 362h3v1h-3zM72 362h3v1h-3zM78 362h3v1h-3zM84 362h3v1h-3zM90 362h3v1h-3zM96 362h3v1h-3zM102 362h3v1h-3zM108 362h3v1h-3zM114 362h3v1h-3zM120 362h3v1h-3zM126 362h3v1h-3zM132 362h3v1h-3zM138 362h3v1h-3zM144 362h3v1h-3zM150 362h3v1h-3zM156 362h3v1h-3zM162 362h3v1h-3zM168 362h3v1h-3zM174 362h3v1h-3zM180 362h3v1h-3zM186 362h3v1h-3zM192 362h3v1h-3zM198 362h3v1h-3zM204 362h3v1h-3zM210 362h3v1h-3zM216 362h3v1h-3zM222 362h3v1h-3zM228 362h3v1h-3zM234 362h3v1h-3zM240 362h3v1h-3zM246 362h3v1h-3zM252 362h3v1h-3zM258 362h3v1h-3zM264 362h3v1h-3zM270 362h3v1h-3zM276 362h3v1h-3zM282 362h3v1h-3zM288 362h3v1h-3zM294 362h3v1h-3zM300 362h3v1h-3zM306 362h3v1h-3zM312 362h3v1h-3zM318 362h3v1h-3zM324 362h3v1h-3zM330 362h3v1h-3zM336 362h3v1h-3zM342 362h3v1h-3zM348 362h3v1h-3zM354 362h3v1h-3zM360 362h3v1h-3zM366 362h3v1h-3zM372 362h3v1h-3zM378 362h3v1h-3zM384 362h3v1h-3zM390 362h3v1h-3zM396 362h3v1h-3zM402 362h3v1h-3zM408 362h3v1h-3zM414 362h3v1h-3zM420 362h3v1h-3zM426 362h3v1h-3zM432 362h3v1h-3zM438 362h3v1h-3zM444 362h3v1h-3zM450 362h3v1h-3zM456 362h3v1h-3zM462 362h3v1h-3zM468 362h3v1h-3zM474 362h3v1h-3zM480 362h3v1h-3zM486 362h3v1h-3zM492 362h3v1h-3zM498 362h3v1h-3zM504 362h3v1h-3zM510 362h3v1h-3zM516 362h3v1h-3zM522 362h3v1h-3zM528 362h3v1h-3zM534 362h3v1h-3zM540 362h3v1h-3zM546 362h3v1h-3zM552 362h3v1h-3zM558 362h3v1h-3zM564 362h3v1h-3zM570 362h3v1h-3zM576 362h3v1h-3zM582 362h3v1h-3zM588 362h3v1h-3zM594 362h3v1h-3zM600 362h3v1h-3zM606 362h3v1h-3zM612 362h3v1h-3zM618 362h3v1h-3zM624 362h3v1h-3zM630 362h3v1h-3zM636 362h3v1h-3zM642 362h3v1h-3zM648 362h3v1h-3zM654 362h3v1h-3zM660 362h3v1h-3zM666 362h3v1h-3zM672 362h3v1h-3z" fill="#c0c0c0"/><g clip-path="url(#cm)"><rect x="11" y="54" width="1" height="42" fill="#00ff00"/><rect x="9" y="54" width="5" height="40" fill="#00ff00"/><rect x="10" y="55" width="3" height="38" fill="#ffffff"/><rect x="19" y="65" width="1" height="40" fill="#00ff00"/><rect x="17" y="65" width="5" height="29" fill="#00ff00"/><rect x="18" y="66" width="3" height="27" fill="#000000"/><rect x="27" y="48" width="1" height="27" fill="#00ff00"/><rect x="25" y="65" width="5" height="6" fill="#00ff00"/><rect x="26" y="66" width="3" height="4" fill="#ffffff"/><rect x="35" y="58" width="1" height="32" fill="#00ff00"/><rect x="33" y="70" width="5" height="5" fill="#00ff00"/><rect x="34" y="71" width="3" height="3" fill="#ffffff"/><rect x="43" y="71" width="1" height="15" fill="#00ff00"/><rect x="41" y="72" width="5" height="2" fill="#00ff00"/><rect x="51" y="70" width="1" height="19" fill="#00ff00"/><rect x="49" y="72" width="5" height="15" fill="#00ff00"/><rect x="50" y="73" width="3" height="13" fill="#ffffff"/><rect x="59" y="69" width="1" height="20" fill="#00ff00"/><rect x="57" y="69" width="5" height="18" fill="#00ff00"/><rect x="58" y="70" width="3" height="16" fill="#000000"/><rect x="67" y="56" width="1" height="23" fill="#00ff00"/><rect x="65" y="59" width="5" height="10" fill="#00ff00"/><rect x="66" y="60" width="3" height="8" fill="#000000"/><rect x="75" y="54" width="1" height="23" fill="#00ff00"/><rect x="73" y="59" width="5" height="6" fill="#00ff00"/><rect x="74" y="60" width="3" height="4" fill="#ffffff"/><rect x="83" y="59" width="1" height="19" fill="#00ff00"/><rect x="81" y="64" width="5" height="8" fill="#00ff00"/><rect x="82" y="65" width="3" height="6" fill="#ffffff"/><rect x="91" y="68" width="1" height="15" fill="#00ff00"/><rect x="89" y="72" width="5" height="7" fill="#00ff00"/><rect x="90" y="73" width="3" height="5" fill="#ffffff"/><rect x="99" y="75" width="1" height="23" fill="#00ff00"/><rect x="97" y="78" width="5" height="11" fill="#00ff00"/><rect x="98" y="79" width="3" height="9" fill="#ffffff"/><rect x="107" y="80" width="1" height="31" fill="#00ff00"/><rect x="105" y="88" width="5" height="22" fill="#00ff00"/><rect x="106" y="89" width="3" height="20" fill="#ffffff"/><rect x="115" y="84" width="1" height="32" fill="#00ff00"/><rect x="113" y="90" width="5" height="21" fill="#00ff00"/><rect x="114" y="91" width="3" height="19" fill="#000000"/><rect x="123" y="85" width="1" height="47" fill="#00ff00"/><rect x="121" y="89" width="5" height="36" fill="#00ff00"/><rect x="122" y="90" width="3" height="34" fill="#ffffff"/><rect x="131" y="86" width="1" height="46" fill="#00ff00"/><rect x="129" y="104" width="5" height="20" fill="#00ff00"/><rect x="130" y="105" width="3" height="18" fill="#000000"/><rect x="139" y="81" width="1" height="33" fill="#00ff00"/><rect x="137" y="92" width="5" height="13" fill="#00ff00"/><rect x="138" y="93" width="3" height="11" fill="#000000"/><rect x="147" y="68" width="1" height="37" fill="#00ff00"/><rect x="145" y="92" width="5" height="10" fill="#00ff00"/><rect x="146" y="93" width="3" height="8" fill="#ffffff"/><rect x="155" y="98" width="1" height="66" fill="#00ff00"/><rect x="153" y="102" width="5" height="51" fill="#00ff00"/><rect x="154" y="103" width="3" height="49" fill="#ffffff"/><rect x="163" y="126" width="1" height="105" fill="#00ff00"/><rect x="161" y="149" width="5" height="4" fill="#00ff00"/><rect x="162" y="150" width="3" height="2" fill="#000000"/><rect x="171" y="141" width="1" height="92" fill="#00ff00"/><rect x="169" y="150" width="5" height="12" fill="#00ff00"/><rect x="170" y="151" width="3" height="10" fill="#ffffff"/><rect x="179" y="152" width="1" height="56" fill="#00ff00"/><rect x="177" y="161" width="5" height="44" fill="#00ff00"/><rect x="178" y="162" width="3" height="42" fill="#ffffff"/><rect x="187" y="183" width="1" height="48" fill="#00ff00"/><rect x="185" y="189" width="5" height="15" fill="#00ff00"/><rect x="186" y="190" width="3" height="13" fill="#000000"/><rect x="195" y="170" width="1" height="27" fill="#00ff00"/><rect x="193" y="176" width="5" height="14" fill="#00ff00"/><rect x="194" y="177" width="3" height="12" fill="#000000"/><rect x="203" y="159" width="1" height="22" fill="#00ff00"/><rect x="201" y="172" width="5" height="5" fill="#00ff00"/><rect x="202" y="173" width="3" height="3" fill="#000000"/><rect x="211" y="150" width="1" height="26" fill="#00ff00"/><rect x="209" y="171" width="5" height="2" fill="#00ff00"/><rect x="219" y="149" width="1" height="27" fill="#00ff00"/><rect x="217" y="151" width="5" height="21" fill="#00ff00"/><rect x="218" y="152" width="3" height="19" fill="#000000"/><rect x="227" y="148" width="1" height="44" fill="#00ff00"/><rect x="225" y="151" width="5" height="38" fill="#00ff00"/><rect x="226" y="152" width="3" height="36" fill="#ffffff"/><rect x="235" y="180" width="1" height="37" fill="#00ff00"/><rect x="233" y="207" width="5" height="3" fill="#00ff00"/><rect x="234" y="208" width="3" height="1" fill="#ffffff"/><rect x="243" y="194" width="1" height="27" fill="#00ff00"/><rect x="241" y="205" width="5" height="6" fill="#00ff00"/><rect x="242" y="206" width="3" height="4" fill="#000000"/><rect x="251" y="200" width="1" height="32" fill="#00ff00"/><rect x="249" y="205" width="5" height="20" fill="#00ff00"/><rect x="250" y="206" width="3" height="18" fill="#ffffff"/><rect x="259" y="194" width="1" height="31" fill="#00ff00"/><rect x="257" y="199" width="5" height="26" fill="#00ff00"/><rect x="258" y="200" width="3" height="24" fill="#000000"/><rect x="267" y="167" width="1" height="38" fill="#00ff00"/><rect x="265" y="180" width="5" height="21" fill="#00ff00"/><rect x="266" y="181" width="3" height="19" fill="#000000"/><rect x="275" y="173" width="1" height="21" fill="#00ff00"/><rect x="273" y="180" width="5" height="4" fill="#00ff00"/><rect x="274" y="181" width="3" height="2" fill="#ffffff"/><rect x="283" y="182" width="1" height="14" fill="#00ff00"/><rect x="281" y="184" width="5" height="4" fill="#00ff00"/><rect x="282" y="185" width="3" height="2" fill="#ffffff"/><rect x="291" y="176" width="1" height="15" fill="#00ff00"/><rect x="289" y="181" width="5" height="7" fill="#00ff00"/><rect x="290" y="182" width="3" height="5" fill="#000000"/><rect x="299" y="169" width="1" height="21" fill="#00ff00"/><rect x="297" y="180" width="5" height="10" fill="#00ff00"/><rect x="298" y="181" width="3" height="8" fill="#ffffff"/><rect x="307" y="166" width="1" height="29" fill="#00ff00"/><rect x="305" y="189" width="5" height="2" fill="#00ff00"/><rect x="315" y="166" width="1" height="49" fill="#00ff00"/><rect x="313" y="190" width="5" height="10" fill="#00ff00"/><rect x="314" y="191" width="3" height="8" fill="#ffffff"/><rect x="323" y="193" width="1" height="35" fill="#00ff00"/><rect x="321" y="199" width="5" height="24" fill="#00ff00"/><rect x="322" y="200" width="3" height="22" fill="#ffffff"/><rect x="331" y="211" width="1" height="21" fill="#00ff00"/><rect x="329" y="221" width="5" height="2" fill="#00ff00"/><rect x="339" y="198" width="1" height="25" fill="#00ff00"/><rect x="337" y="199" width="5" height="24" fill="#00ff00"/><rect x="338" y="200" width="3" height="22" fill="#000000"/><rect x="347" y="192" width="1" height="21" fill="#00ff00"/><rect x="345" y="200" width="5" height="7" fill="#00ff00"/><rect x="346" y="201" width="3" height="5" fill="#ffffff"/><rect x="355" y="200" width="1" height="26" fill="#00ff00"/><rect x="353" y="206" width="5" height="6" fill="#00ff00"/><rect x="354" y="207" width="3" height="4" fill="#ffffff"/><rect x="363" y="208" width="1" height="52" fill="#00ff00"/><rect x="361" y="210" width="5" height="37" fill="#00ff00"/><rect x="362" y="211" width="3" height="35" fill="#ffffff"/><rect x="371" y="209" width="1" height="52" fill="#00ff00"/><rect x="369" y="237" width="5" height="10" fill="#00ff00"/><rect x="370" y="238" width="3" height="8" fill="#000000"/><rect x="379" y="230" width="1" height="29" fill="#00ff00"/><rect x="377" y="237" width="5" height="10" fill="#00ff00"/><rect x="378" y="238" width="3" height="8" fill="#ffffff"/><rect x="387" y="219" width="1" height="46" fill="#00ff00"/><rect x="385" y="230" width="5" height="17" fill="#00ff00"/><rect x="386" y="231" width="3" height="15" fill="#000000"/><rect x="395" y="229" width="1" height="35" fill="#00ff00"/><rect x="393" y="230" width="5" height="34" fill="#00ff00"/><rect x="394" y="231" width="3" height="32" fill="#ffffff"/><rect x="403" y="256" width="1" height="21" fill="#00ff00"/><rect x="401" y="262" width="5" height="12" fill="#00ff00"/><rect x="402" y="263" width="3" height="10" fill="#ffffff"/><rect x="411" y="266" width="1" height="19" fill="#00ff00"/><rect x="409" y="273" width="5" height="4" fill="#00ff00"/><rect x="410" y="274" width="3" height="2" fill="#ffffff"/><rect x="419" y="245" width="1" height="34" fill="#00ff00"/><rect x="417" y="247" width="5" height="30" fill="#00ff00"/><rect x="418" y="248" width="3" height="28" fill="#000000"/><rect x="427" y="237" width="1" height="22" fill="#00ff00"/><rect x="425" y="240" width="5" height="8" fill="#00ff00"/><rect x="426" y="241" width="3" height="6" fill="#000000"/><rect x="435" y="239" width="1" height="17" fill="#00ff00"/><rect x="433" y="239" width="5" height="7" fill="#00ff00"/><rect x="434" y="240" width="3" height="5" fill="#ffffff"/><rect x="443" y="245" width="1" height="23" fill="#00ff00"/><rect x="441" y="245" width="5" height="18" fill="#00ff00"/><rect x="442" y="246" width="3" height="16" fill="#ffffff"/><rect x="451" y="250" width="1" height="31" fill="#00ff00"/><rect x="449" y="252" width="5" height="11" fill="#00ff00"/><rect x="450" y="253" width="3" height="9" fill="#000000"/><rect x="459" y="225" width="1" height="31" fill="#00ff00"/><rect x="457" y="252" width="5" height="3" fill="#00ff00"/><rect x="458" y="253" width="3" height="1" fill="#ffffff"/><rect x="467" y="230" width="1" height="26" fill="#00ff00"/><rect x="465" y="237" width="5" height="19" fill="#00ff00"/><rect x="466" y="238" width="3" height="17" fill="#000000"/><rect x="475" y="227" width="1" height="21" fill="#00ff00"/><rect x="473" y="231" width="5" height="7" fill="#00ff00"/><rect x="474" y="232" width="3" height="5" fill="#000000"/><rect x="483" y="220" width="1" height="16" fill="#00ff00"/><rect x="481" y="221" width="5" height="11" fill="#00ff00"/><rect x="482" y="222" width="3" height="9" fill="#000000"/><rect x="491" y="219" width="1" height="25" fill="#00ff00"/><rect x="489" y="221" width="5" height="13" fill="#00ff00"/><rect x="490" y="222" width="3" height="11" fill="#ffffff"/><rect x="499" y="177" width="1" height="71" fill="#00ff00"/><rect x="497" y="181" width="5" height="53" fill="#00ff00"/><rect x="498" y="182" width="3" height="51" fill="#000000"/><rect x="507" y="137" width="1" height="57" fill="#00ff00"/><rect x="505" y="157" width="5" height="25" fill="#00ff00"/><rect x="506" y="158" width="3" height="23" fill="#000000"/><rect x="515" y="95" width="1" height="73" fill="#00ff00"/><rect x="513" y="110" width="5" height="48" fill="#00ff00"/><rect x="514" y="111" width="3" height="46" fill="#000000"/><rect x="523" y="91" width="1" height="29" fill="#00ff00"/><rect x="521" y="106" width="5" height="5" fill="#00ff00"/><rect x="522" y="107" width="3" height="3" fill="#000000"/><rect x="531" y="99" width="1" height="45" fill="#00ff00"/><rect x="529" y="106" width="5" height="33" fill="#00ff00"/><rect x="530" y="107" width="3" height="31" fill="#ffffff"/><rect x="539" y="126" width="1" height="46" fill="#00ff00"/><rect x="537" y="139" width="5" height="23" fill="#00ff00"/><rect x="538" y="140" width="3" height="21" fill="#ffffff"/><rect x="547" y="119" width="1" height="47" fill="#00ff00"/><rect x="545" y="133" width="5" height="28" fill="#00ff00"/><rect x="546" y="134" width="3" height="26" fill="#000000"/><rect x="555" y="131" width="1" height="69" fill="#00ff00"/><rect x="553" y="133" width="5" height="36" fill="#00ff00"/><rect x="554" y="134" width="3" height="34" fill="#ffffff"/><rect x="563" y="150" width="1" height="41" fill="#00ff00"/><rect x="561" y="169" width="5" height="15" fill="#00ff00"/><rect x="562" y="170" width="3" height="13" fill="#ffffff"/><rect x="571" y="163" width="1" height="34" fill="#00ff00"/><rect x="569" y="171" width="5" height="13" fill="#00ff00"/><rect x="570" y="172" width="3" height="11" fill="#000000"/><rect x="579" y="164" width="1" height="33" fill="#00ff00"/><rect x="577" y="171" width="5" height="25" fill="#00ff00"/><rect x="578" y="172" width="3" height="23" fill="#ffffff"/><rect x="587" y="190" width="1" height="52" fill="#00ff00"/><rect x="585" y="194" width="5" height="38" fill="#00ff00"/><rect x="586" y="195" width="3" height="36" fill="#ffffff"/><rect x="595" y="221" width="1" height="18" fill="#00ff00"/><rect x="593" y="229" width="5" height="3" fill="#00ff00"/><rect x="594" y="230" width="3" height="1" fill="#ffffff"/><rect x="603" y="201" width="1" height="28" fill="#00ff00"/><rect x="601" y="217" width="5" height="12" fill="#00ff00"/><rect x="602" y="218" width="3" height="10" fill="#000000"/><rect x="611" y="194" width="1" height="29" fill="#00ff00"/><rect x="609" y="197" width="5" height="21" fill="#00ff00"/><rect x="610" y="198" width="3" height="19" fill="#000000"/><rect x="619" y="189" width="1" height="13" fill="#00ff00"/><rect x="617" y="194" width="5" height="5" fill="#00ff00"/><rect x="618" y="195" width="3" height="3" fill="#000000"/><rect x="627" y="186" width="1" height="12" fill="#00ff00"/><rect x="625" y="192" width="5" height="3" fill="#00ff00"/><rect x="626" y="193" width="3" height="1" fill="#ffffff"/><rect x="635" y="184" width="1" height="15" fill="#00ff00"/><rect x="633" y="185" width="5" height="8" fill="#00ff00"/><rect x="634" y="186" width="3" height="6" fill="#000000"/><rect x="643" y="179" width="1" height="24" fill="#00ff00"/><rect x="641" y="186" width="5" height="10" fill="#00ff00"/><rect x="642" y="187" width="3" height="8" fill="#ffffff"/><rect x="651" y="189" width="1" height="29" fill="#00ff00"/><rect x="649" y="195" width="5" height="12" fill="#00ff00"/><rect x="650" y="196" width="3" height="10" fill="#ffffff"/><rect x="659" y="206" width="1" height="21" fill="#00ff00"/><rect x="657" y="206" width="5" height="18" fill="#00ff00"/><rect x="658" y="207" width="3" height="16" fill="#ffffff"/><rect x="667" y="218" width="1" height="14" fill="#00ff00"/><rect x="665" y="224" width="5" height="3" fill="#00ff00"/><rect x="666" y="225" width="3" height="1" fill="#ffffff"/><rect x="675" y="220" width="1" height="12" fill="#00ff00"/><rect x="673" y="225" width="5" height="3" fill="#00ff00"/><rect x="674" y="226" width="3" height="1" fill="#ffffff"/></g><g clip-path="url(#cp2)"><polyline points="11.5,377 19.5,366 27.5,366 35.5,374 43.5,369 51.5,364 59.5,368 67.5,368 75.5,352 83.5,372 91.5,374 99.5,362 107.5,382 115.5,375 123.5,374 131.5,376 139.5,370 147.5,372 155.5,390 163.5,386 171.5,395 179.5,414 187.5,407 195.5,400 203.5,396 211.5,393 219.5,378 227.5,397 235.5,394 243.5,398 251.5,410 259.5,399 267.5,374 275.5,375 283.5,373 291.5,355 299.5,361 307.5,367 315.5,372 323.5,381 331.5,388 339.5,367 347.5,362 355.5,365 363.5,371 371.5,376 379.5,386 387.5,380 395.5,390 403.5,396 411.5,395 419.5,383 427.5,378 435.5,372 443.5,377 451.5,381 459.5,381 467.5,372 475.5,357 483.5,357 491.5,357 499.5,341 507.5,323 515.5,303 523.5,301 531.5,323 539.5,334 547.5,322 555.5,327 563.5,337 571.5,332 579.5,347 587.5,362 595.5,365 603.5,357 611.5,368 619.5,376 627.5,392 635.5,392 643.5,383 651.5,380 659.5,395 667.5,384 675.5,379" fill="none" stroke="#1e90ff" stroke-width="2" stroke-linejoin="round"/></g><g clip-path="url(#cp3)"><polyline points="11.5,502 19.5,505 27.5,505 35.5,505 43.5,506 51.5,506 59.5,504 67.5,501 75.5,498 83.5,497 91.5,497 99.5,502 107.5,505 115.5,506 123.5,510 131.5,512 139.5,516 147.5,518 155.5,520 163.5,520 171.5,522 179.5,522 187.5,522 195.5,522 203.5,522 211.5,525 219.5,529 227.5,532 235.5,533 243.5,536 251.5,540 259.5,542 267.5,542 275.5,544 283.5,545 291.5,545 299.5,545 307.5,545 315.5,544 323.5,545 331.5,545 339.5,545 347.5,545 355.5,545 363.5,545 371.5,545 379.5,546 387.5,546 395.5,547 403.5,547 411.5,547 419.5,547 427.5,547 435.5,547 443.5,547 451.5,547 459.5,547 467.5,547 475.5,546 483.5,546 491.5,544 499.5,542 507.5,538 515.5,532 523.5,526 531.5,520 539.5,515 547.5,510 555.5,505 563.5,501 571.5,496 579.5,494 587.5,494 595.5,496 603.5,496 611.5,493 619.5,492 627.5,488 635.5,484 643.5,482 651.5,482 659.5,483 667.5,484 675.5,485" fill="none" stroke="#ffff00" stroke-width="2" stroke-linejoin="round"/><polyline points="11.5,477 19.5,479 27.5,484 35.5,491 43.5,497 51.5,507 59.5,514 67.5,514 75.5,522 83.5,522 91.5,522 99.5,521 107.5,522 115.5,522 123.5,525 131.5,525 139.5,525 147.5,530 155.5,530 163.5,530 171.5,537 179.5,537 187.5,537 195.5,543 203.5,543 211.5,542 219.5,545 227.5,545 235.5,545 243.5,547 251.5,547 259.5,546 267.5,545 275.5,543 283.5,542 291.5,539 299.5,538 307.5,536 315.5,535 323.5,534 331.5,534 339.5,531 347.5,530 355.5,530 363.5,530 371.5,530 379.5,530 387.5,535 395.5,538 403.5,538 411.5,538 419.5,538 427.5,538 435.5,537 443.5,539 451.5,541 459.5,544 467.5,543 475.5,538 483.5,532 491.5,527 499.5,515 507.5,502 515.5,493 523.5,484 531.5,474 539.5,467 547.5,459 555.5,454 563.5,450 571.5,450 579.5,449 587.5,451 595.5,451 603.5,455 611.5,459 619.5,463 627.5,467 635.5,472 643.5,477 651.5,483 659.5,492 667.5,501 675.5,510" fill="none" stroke="#00ffff" stroke-width="2" stroke-linejoin="round"/></g><g shape-rendering="geometricPrecision"><polygon points="106.60,51.20 108.35,55.37 112.84,54.80 110.10,58.40 112.84,62.00 108.35,61.43 106.60,65.60 104.85,61.43 100.36,62.00 103.10,58.40 100.36,54.80 104.85,55.37" fill="#d3d3d3"/><rect x="114" y="56" width="3" height="20" fill="#d3d3d3"/><polygon points="106,64.7 115.5,74.2 125,64.7 125,68.2 115.5,77.7 106,68.2" fill="#d3d3d3"/><polygon points="474.60,251.70 476.35,256.17 481.10,255.45 478.10,259.20 481.10,262.95 476.35,262.23 474.60,266.70 472.85,262.23 468.10,262.95 471.10,259.20 468.10,255.45 472.85,256.17" fill="#ee82ee"/><rect x="482" y="242" width="3" height="18" fill="#ee82ee"/><polygon points="473,248 483,238 493,248 493,251.5 483,241.5 473,251.5" fill="#ee82ee"/></g><rect x="10" y="33" width="667" height="1" fill="#fff"/><rect x="10" y="291" width="667" height="1" fill="#fff"/><rect x="10" y="33" width="1" height="259" fill="#fff"/><rect x="676" y="33" width="1" height="259" fill="#fff"/><rect x="10" y="293" width="667" height="1" fill="#fff"/><rect x="10" y="421" width="667" height="1" fill="#fff"/><rect x="10" y="293" width="1" height="129" fill="#fff"/><rect x="676" y="293" width="1" height="129" fill="#fff"/><rect x="10" y="423" width="667" height="1" fill="#fff"/><rect x="10" y="551" width="667" height="1" fill="#fff"/><rect x="10" y="423" width="1" height="129" fill="#fff"/><rect x="676" y="423" width="1" height="129" fill="#fff"/><rect x="677" y="57" width="2" height="1" fill="#fff"/><rect x="677" y="90" width="2" height="1" fill="#fff"/><rect x="677" y="123" width="2" height="1" fill="#fff"/><rect x="677" y="156" width="2" height="1" fill="#fff"/><rect x="677" y="189" width="2" height="1" fill="#fff"/><rect x="677" y="222" width="2" height="1" fill="#fff"/><rect x="677" y="255" width="2" height="1" fill="#fff"/><rect x="677" y="288" width="2" height="1" fill="#fff"/><rect x="677" y="295" width="2" height="1" fill="#fff"/><rect x="677" y="420" width="2" height="1" fill="#fff"/><rect x="677" y="425" width="2" height="1" fill="#fff"/><rect x="677" y="493" width="2" height="1" fill="#fff"/><rect x="677" y="550" width="2" height="1" fill="#fff"/><rect x="11" y="552" width="1" height="3" fill="#fff"/><rect x="75" y="552" width="1" height="3" fill="#fff"/><rect x="139" y="552" width="1" height="3" fill="#fff"/><rect x="203" y="552" width="1" height="3" fill="#fff"/><rect x="267" y="552" width="1" height="3" fill="#fff"/><rect x="331" y="552" width="1" height="3" fill="#fff"/><rect x="395" y="552" width="1" height="3" fill="#fff"/><rect x="459" y="552" width="1" height="3" fill="#fff"/><rect x="523" y="552" width="1" height="3" fill="#fff"/><rect x="587" y="552" width="1" height="3" fill="#fff"/><rect x="651" y="552" width="1" height="3" fill="#fff"/><polygon points="11,545 11,551 17,551" fill="#8090a0"/><polygon points="14,40 21,40 17.5,44" fill="#fff" shape-rendering="geometricPrecision"/>
</svg>
<div id="lbl"><div class="t" style="left:683px;top:54px;font-size:9.6px;letter-spacing:-0.4px;color:#fff">1.35105</div><div class="t" style="left:683px;top:87px;font-size:9.6px;letter-spacing:-0.4px;color:#fff">1.34880</div><div class="t" style="left:683px;top:120px;font-size:9.6px;letter-spacing:-0.4px;color:#fff">1.34655</div><div class="t" style="left:683px;top:153px;font-size:9.6px;letter-spacing:-0.4px;color:#fff">1.34430</div><div class="t" style="left:683px;top:186px;font-size:9.6px;letter-spacing:-0.4px;color:#fff">1.34205</div><div class="t" style="left:683px;top:219px;font-size:9.6px;letter-spacing:-0.4px;color:#fff">1.33975</div><div class="t" style="left:683px;top:252px;font-size:9.6px;letter-spacing:-0.4px;color:#fff">1.33750</div><div class="t" style="left:683px;top:285px;font-size:9.6px;letter-spacing:-0.4px;color:#fff">1.33525</div><div class="t" style="left:680px;top:297px;font-size:9.6px;letter-spacing:-0.4px;color:#fff">100.9491</div><div class="t" style="left:680px;top:359px;font-size:9.6px;letter-spacing:-0.4px;color:#fff">100</div><div class="t" style="left:680px;top:411px;font-size:9.6px;letter-spacing:-0.4px;color:#fff">99.1847</div><div class="t" style="left:680px;top:427px;font-size:9.6px;letter-spacing:-0.3px;color:#fff">120</div><div class="t" style="left:680px;top:433px;font-size:9.6px;letter-spacing:-0.3px;color:#fff">100</div><div class="t" style="left:680px;top:444px;font-size:9.6px;letter-spacing:-0.3px;color:#fff">80</div><div class="t" style="left:680px;top:462px;font-size:9.6px;letter-spacing:-0.3px;color:#fff">50</div><div class="t" style="left:680px;top:490px;font-size:9.6px;letter-spacing:-0.3px;color:#fff">0.00</div><div class="t" style="left:679px;top:519px;font-size:9.6px;letter-spacing:-0.3px;color:#fff">-50</div><div class="t" style="left:679px;top:536px;font-size:9.6px;letter-spacing:-0.3px;color:#fff">-80</div><div class="t" style="left:679px;top:541px;font-size:9.6px;letter-spacing:-0.3px;color:#fff">-100</div><div class="t" style="left:10px;top:557px;font-size:9.6px;letter-spacing:-0.25px;color:#fff">4 Jun 2020</div><div class="t" style="left:74px;top:557px;font-size:9.6px;letter-spacing:-0.25px;color:#fff">5 Jun 04:00</div><div class="t" style="left:138px;top:557px;font-size:9.6px;letter-spacing:-0.25px;color:#fff">5 Jun 12:00</div><div class="t" style="left:202px;top:557px;font-size:9.6px;letter-spacing:-0.25px;color:#fff">5 Jun 20:00</div><div class="t" style="left:266px;top:557px;font-size:9.6px;letter-spacing:-0.25px;color:#fff">8 Jun 04:00</div><div class="t" style="left:330px;top:557px;font-size:9.6px;letter-spacing:-0.25px;color:#fff">8 Jun 12:00</div><div class="t" style="left:394px;top:557px;font-size:9.6px;letter-spacing:-0.25px;color:#fff">8 Jun 20:00</div><div class="t" style="left:458px;top:557px;font-size:9.6px;letter-spacing:-0.25px;color:#fff">9 Jun 04:00</div><div class="t" style="left:522px;top:557px;font-size:9.6px;letter-spacing:-0.25px;color:#fff">9 Jun 12:00</div><div class="t" style="left:586px;top:557px;font-size:9.6px;letter-spacing:-0.25px;color:#fff">9 Jun 20:00</div><div class="t" style="left:650px;top:557px;font-size:9.6px;letter-spacing:-0.25px;color:#fff">10 Jun 04:00</div><div class="t" style="left:26px;top:39px;font-size:9.6px;letter-spacing:0.1px;color:#fff">USDCAD,H1</div><div class="t" style="left:89px;top:39px;font-size:9.6px;letter-spacing:-0.4px;color:#fff">1.30826</div><div class="t" style="left:125px;top:39px;font-size:9.6px;letter-spacing:-0.4px;color:#fff">1.30838</div><div class="t" style="left:160px;top:39px;font-size:9.6px;letter-spacing:-0.4px;color:#fff">1.30556</div><div class="t" style="left:196px;top:39px;font-size:9.6px;letter-spacing:-0.4px;color:#fff">1.30676</div><div class="t" style="left:15px;top:299px;font-size:9.6px;letter-spacing:-0.15px;color:#fff">Momentum(14) 99.6135</div><div class="t" style="left:15px;top:429px;font-size:9.6px;letter-spacing:-0.2px;color:#fff">R1(26) -79.9</div><div class="t" style="left:72px;top:429px;font-size:9.6px;letter-spacing:-0.2px;color:#fff">R1(52) -78.0</div><div class="t" style="left:27px;top:11px;font-size:12px;letter-spacing:-0.7px;color:#141c30;-webkit-text-stroke:0">USDCAD,H1</div></div>
</body></html>
